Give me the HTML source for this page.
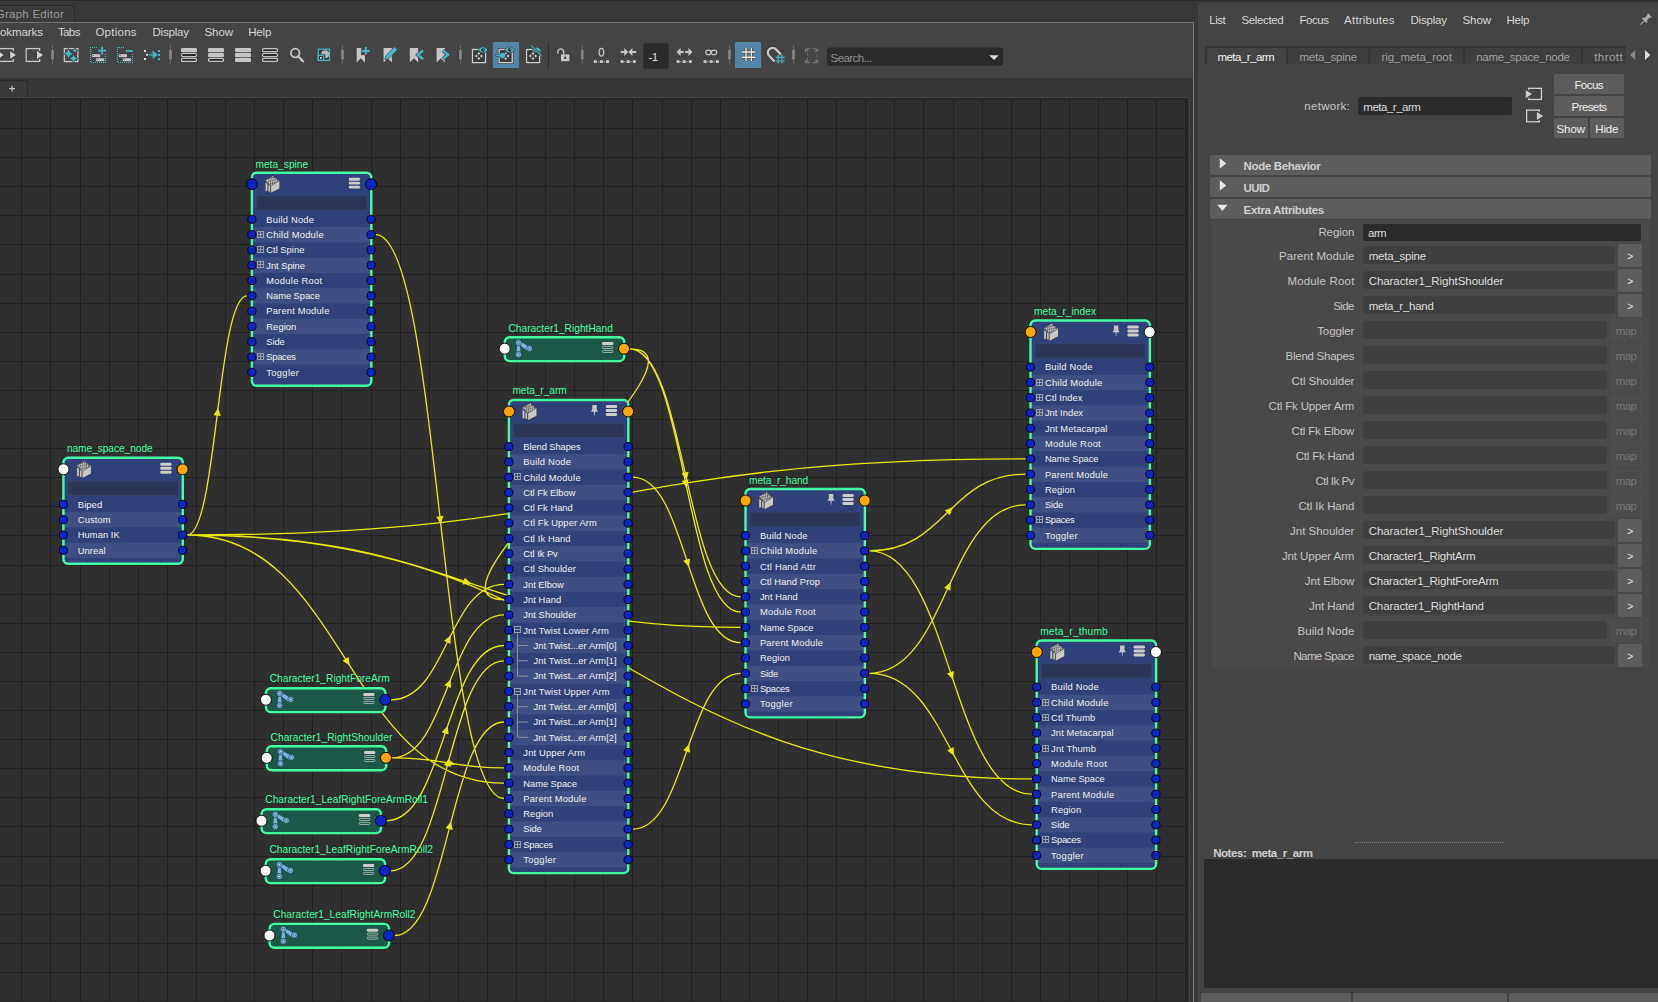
<!DOCTYPE html>
<html><head><meta charset="utf-8"><title>Node Editor</title>
<style>
html,body{margin:0;padding:0;}
body{width:1658px;height:1002px;overflow:hidden;background:#444444;position:relative;font-family:'Liberation Sans',sans-serif;}
.a{position:absolute;}
.t{position:absolute;white-space:pre;line-height:1.15;}
svg{overflow:hidden;}
</style></head><body>
<div class="a" style="left:0px;top:0px;width:1658px;height:3px;background:#383838;"></div>
<div class="a" style="left:0px;top:0px;width:1658px;height:1.4px;background:#2a2a2a;"></div>
<div class="a" style="left:0px;top:3px;width:1198px;height:20px;background:#383838;"></div>
<div class="a" style="left:-3px;top:4.8px;width:78px;height:18.2px;background:#3a3a3a;border:1px solid #2a2a2a;border-bottom:none;border-radius:3px 3px 0 0;box-sizing:border-box;"></div>
<div class="a" style="left:0px;top:22px;width:1194.3px;height:1.2px;background:#737373;"></div>
<div class="a" style="left:1193px;top:22px;width:1.4px;height:980px;background:#7a7a7a;"></div>
<div class="a" style="left:1194.4px;top:3px;width:3.6px;height:999px;background:#383838;"></div>
<div class="a" style="left:0px;top:78px;width:1193px;height:19.5px;background:#373737;"></div>
<div class="a" style="left:-3px;top:80.2px;width:31px;height:17.3px;background:#393939;border:1px solid #2b2b2b;border-bottom:none;border-radius:3px 3px 0 0;box-sizing:border-box;"></div>
<svg class="a" style="left:8px;top:84px" width="9" height="9"><path d="M1.2 4.6h5.8M4.1 1.7v5.8" stroke="#cfcfcf" stroke-width="1.15"/></svg>
<div class="a" style="left:1188px;top:78px;width:5px;height:924px;background:#373737;"></div>
<svg class="a" style="left:0;top:38px" width="1190" height="40" viewBox="0 38 1190 40"><rect x="-2" y="48.6" width="15.3" height="12.8" fill="none" stroke="#c6c6c6" stroke-width="1.3"/><rect x="9.8" y="51" width="5" height="8" fill="#444"/><path d="M10.2 51.2l5.8 3.8l-5.8 3.8z" fill="#cfcfcf"/><path d="M-1.4 51.2l5 3.8l-5 3.8z" fill="#cfcfcf"/><rect x="26.2" y="48.6" width="13.4" height="12.8" fill="none" stroke="#c6c6c6" stroke-width="1.3"/><rect x="36.6" y="51" width="4.4" height="8" fill="#444"/><path d="M37 51l6 4l-6 4z" fill="#cfcfcf"/><path d="M52.5 45V64.6" stroke="#727272" stroke-width="0.8"/><rect x="51.1" y="50" width="2.8" height="9.6" rx="0.8" fill="#858585"/><rect x="64.4" y="48.6" width="13.5" height="13" fill="none" stroke="#c6c6c6" stroke-width="1.3"/><path d="M68.4 49.5Q69.346 52.854 72.7 53.8Q69.346 54.745999999999995 68.4 58.099999999999994Q67.45400000000001 54.745999999999995 64.10000000000001 53.8Q67.45400000000001 52.854 68.4 49.5Z" fill="#45b9c9" stroke="#444" stroke-width="1.4" paint-order="stroke"/><path d="M73.6 55.0Q74.392 57.808 77.19999999999999 58.6Q74.392 59.392 73.6 62.2Q72.80799999999999 59.392 70.0 58.6Q72.80799999999999 57.808 73.6 55.0Z" fill="#45b9c9" stroke="#444" stroke-width="1.4" paint-order="stroke"/><path d="M74.8 48.199999999999996Q75.28399999999999 49.916 77.0 50.4Q75.28399999999999 50.884 74.8 52.6Q74.316 50.884 72.6 50.4Q74.316 49.916 74.8 48.199999999999996Z" fill="#45b9c9" stroke="#444" stroke-width="1.4" paint-order="stroke"/><rect x="90.5" y="47.5" width="15" height="15" fill="none" stroke="#45b9c9" stroke-width="1.2" stroke-dasharray="1 1" stroke-dashoffset="0.5"/><rect x="97.8" y="47" width="8.6" height="6.4" fill="#444"/><path d="M98.2 50.6h7.8M102.1 46.8v7.6" stroke="#45b9c9" stroke-width="1.7"/><rect x="92.0" y="54.2" width="8.2" height="2.9" fill="#c6c6c6"/><rect x="92.8" y="55.1" width="1" height="1" fill="#444"/><rect x="96.0" y="58.3" width="8.2" height="2.9" fill="#c6c6c6"/><rect x="96.8" y="59.2" width="1" height="1" fill="#444"/><rect x="117.5" y="47.5" width="15" height="15" fill="none" stroke="#45b9c9" stroke-width="1.2" stroke-dasharray="1 1" stroke-dashoffset="0.5"/><rect x="124.6" y="47" width="8.6" height="6.4" fill="#444"/><path d="M126.0 51h6.8" stroke="#45b9c9" stroke-width="1.7"/><rect x="118.8" y="54.2" width="8.2" height="2.9" fill="#c6c6c6"/><rect x="119.6" y="55.1" width="1" height="1" fill="#444"/><rect x="122.8" y="58.3" width="8.2" height="2.9" fill="#c6c6c6"/><rect x="123.6" y="59.2" width="1" height="1" fill="#444"/><rect x="143.8" y="49.8" width="2.4" height="2.4" fill="#eee" stroke="#2b2b2b" stroke-width="0.5"/><rect x="146" y="53.6" width="2.4" height="2.4" fill="#eee" stroke="#2b2b2b" stroke-width="0.5"/><rect x="143.8" y="57.8" width="2.4" height="2.4" fill="#eee" stroke="#2b2b2b" stroke-width="0.5"/><path d="M149 54.8h4.2v-3l3.6 3l-3.6 3v-3" fill="#45b9c9" stroke="#45b9c9" stroke-width="1.2"/><rect x="158" y="50" width="2" height="2" fill="#45b9c9"/><rect x="158" y="54" width="2" height="2" fill="#45b9c9"/><rect x="158" y="58.2" width="2" height="2" fill="#45b9c9"/><path d="M170.5 45V64.6" stroke="#727272" stroke-width="0.8"/><rect x="169.1" y="50" width="2.8" height="9.6" rx="0.8" fill="#858585"/><rect x="181" y="48.0" width="16" height="4.2" rx="1.2" fill="#c6c6c6"/><rect x="181.6" y="53.5" width="14.8" height="3.0" rx="1" fill="#2b2b2b" stroke="#c6c6c6" stroke-width="1.2"/><rect x="181.6" y="58.4" width="14.8" height="3.0" rx="1" fill="#2b2b2b" stroke="#c6c6c6" stroke-width="1.2"/><rect x="208" y="48.0" width="16" height="4.2" rx="1.2" fill="#c6c6c6"/><rect x="208" y="52.9" width="16" height="4.2" rx="1.2" fill="#c6c6c6"/><rect x="208.6" y="58.4" width="14.8" height="3.0" rx="1" fill="#2b2b2b" stroke="#c6c6c6" stroke-width="1.2"/><rect x="235" y="48.0" width="16" height="4.2" rx="1.2" fill="#c6c6c6"/><rect x="235" y="52.9" width="16" height="4.2" rx="1.2" fill="#c6c6c6"/><rect x="235" y="57.8" width="16" height="4.2" rx="1.2" fill="#c6c6c6"/><rect x="262.6" y="48.6" width="14.8" height="3.0" rx="1" fill="#2b2b2b" stroke="#c6c6c6" stroke-width="1.2"/><rect x="262.6" y="53.5" width="14.8" height="3.0" rx="1" fill="#2b2b2b" stroke="#c6c6c6" stroke-width="1.2"/><rect x="262.6" y="58.4" width="14.8" height="3.0" rx="1" fill="#2b2b2b" stroke="#c6c6c6" stroke-width="1.2"/><circle cx="295.2" cy="53" r="4.3" fill="none" stroke="#c6c6c6" stroke-width="1.8"/><path d="M298.4 56.4L303.2 61.4" stroke="#c6c6c6" stroke-width="2.2" stroke-linecap="round"/><rect x="318.3" y="49.2" width="11.2" height="11.2" fill="#3c3c3c" stroke="#45b9c9" stroke-width="1.2"/><circle cx="325.2" cy="54.2" r="3.9" fill="#b4b4b4"/><path d="M325.2 54.2L321 54.2A4.2 4.2 0 0 0 325.2 58.4Z" fill="#3c3c3c"/><rect x="318.3" y="55.4" width="5.2" height="5" fill="#333" stroke="#45b9c9" stroke-width="1.2"/><rect x="320" y="57" width="1.8" height="1.8" fill="#ddd"/><path d="M342.5 45V64.6" stroke="#727272" stroke-width="0.8"/><rect x="341.1" y="50" width="2.8" height="9.6" rx="0.8" fill="#858585"/><path d="M356.7 48h8.3v14.6l-4.15-4.4l-4.15 4.4z" fill="#c6c6c6"/><rect x="361.2" y="46.4" width="9" height="8.8" fill="#444"/><path d="M362 51h7.6M365.8 47v7.8" stroke="#45b9c9" stroke-width="2"/><path d="M383.6 48h8.3v14.6l-4.15-4.4l-4.15 4.4z" fill="#c6c6c6"/><path d="M384.8 59.6L385.8 55.8L394.4 46.8L397.6 49.8L388.8 58.6Z" fill="#45b9c9" stroke="#444" stroke-width="0.7"/><path d="M409.8 48h8.3v14.6l-4.15-4.4l-4.15 4.4z" fill="#c6c6c6"/><path d="M423 50.4L418 54.8L423 59.2" fill="none" stroke="#444" stroke-width="3.8"/><path d="M423 50.4L418 54.8L423 59.2" fill="none" stroke="#45b9c9" stroke-width="2.3"/><path d="M436.6 48h8.3v14.6l-4.15-4.4l-4.15 4.4z" fill="#c6c6c6"/><path d="M443 50.4L448 54.8L443 59.2" fill="none" stroke="#444" stroke-width="3.8"/><path d="M443 50.4L448 54.8L443 59.2" fill="none" stroke="#45b9c9" stroke-width="2.3"/><path d="M460.4 45V64.6" stroke="#727272" stroke-width="0.8"/><rect x="459.0" y="50" width="2.8" height="9.6" rx="0.8" fill="#858585"/><rect x="472.45" y="49.45" width="13.1" height="13.2" fill="none" stroke="#383434" stroke-width="2.5"/><rect x="472.45" y="49.45" width="13.1" height="13.2" fill="#3a3a3a" stroke="#cfcfcf" stroke-width="1.3"/><path d="M478.90000000000003 51.95L480.40000000000003 53.45L478.90000000000003 54.95L477.40000000000003 53.45Z" fill="#c6c6c6"/><path d="M476.35 54.5L477.85 56.0L476.35 57.5L474.85 56.0Z" fill="#c6c6c6"/><path d="M481.45000000000005 54.5L482.95000000000005 56.0L481.45000000000005 57.5L479.95000000000005 56.0Z" fill="#c6c6c6"/><path d="M478.90000000000003 57.05L480.40000000000003 58.55L478.90000000000003 60.05L477.40000000000003 58.55Z" fill="#c6c6c6"/><path d="M477.8 50.0Q482.90000000000003 43.6 488.00000000000006 50.0Q482.90000000000003 56.2 477.8 50.0Z" fill="#45b9c9" stroke="#3d3a3a" stroke-width="0.7"/><circle cx="483.00000000000006" cy="49.8" r="1.85" fill="#3a2f2f"/><circle cx="483.6" cy="49.3" r="0.6" fill="#45b9c9"/><rect x="492.9" y="41.9" width="26.2" height="26.1" rx="1.2" fill="#5285a6"/><rect x="499.15" y="49.45" width="13.1" height="13.2" fill="none" stroke="#383434" stroke-width="2.5"/><rect x="499.15" y="49.45" width="13.1" height="13.2" fill="#3a3a3a" stroke="#cfcfcf" stroke-width="1.3"/><path d="M505.6 51.95L507.1 53.45L505.6 54.95L504.1 53.45Z" fill="#c6c6c6"/><path d="M503.05 54.5L504.55 56.0L503.05 57.5L501.55 56.0Z" fill="#c6c6c6"/><path d="M508.15000000000003 54.5L509.65000000000003 56.0L508.15000000000003 57.5L506.65000000000003 56.0Z" fill="#c6c6c6"/><path d="M505.6 57.05L507.1 58.55L505.6 60.05L504.1 58.55Z" fill="#c6c6c6"/><path d="M504.5 50.0Q509.6 43.6 514.7 50.0Q509.6 56.2 504.5 50.0Z" fill="#45b9c9" stroke="#3d3a3a" stroke-width="0.7"/><circle cx="509.70000000000005" cy="49.8" r="1.85" fill="#3a2f2f"/><circle cx="510.3" cy="49.3" r="0.6" fill="#45b9c9"/><path d="M496.4 55.5h5" stroke="#3d3a3a" stroke-width="2.6" stroke-linecap="round"/><circle cx="502.5" cy="55.5" r="3.3" fill="#3d3a3a"/><path d="M496.4 55.5h5" stroke="#45b9c9" stroke-width="1.3" stroke-linecap="round"/><circle cx="502.5" cy="55.5" r="2.7" fill="#45b9c9"/><rect x="526.55" y="49.45" width="13.1" height="13.2" fill="none" stroke="#383434" stroke-width="2.5"/><rect x="526.55" y="49.45" width="13.1" height="13.2" fill="#3a3a3a" stroke="#cfcfcf" stroke-width="1.3"/><path d="M533.0 51.95L534.5 53.45L533.0 54.95L531.5 53.45Z" fill="#c6c6c6"/><path d="M530.45 54.5L531.95 56.0L530.45 57.5L528.95 56.0Z" fill="#c6c6c6"/><path d="M535.55 54.5L537.05 56.0L535.55 57.5L534.05 56.0Z" fill="#c6c6c6"/><path d="M533.0 57.05L534.5 58.55L533.0 60.05L531.5 58.55Z" fill="#c6c6c6"/><path d="M531.8 50.4Q536.4 44.0 541.4 50.2Q538.4 52.6 535.8 53.0Z" fill="#45b9c9" stroke="#3d3a3a" stroke-width="0.6"/><path d="M531.0 45.4L541.4 55.6" stroke="#3d3a3a" stroke-width="2.6"/><path d="M531.0 45.4L541.4 55.6" stroke="#45b9c9" stroke-width="1.2"/><path d="M548.4 43V67.6" stroke="#2b2b2b" stroke-width="1.1"/><rect x="561" y="54.4" width="8.4" height="6.8" fill="#c6c6c6"/><rect x="564.2" y="56.6" width="2" height="2.4" fill="#333"/><path d="M557.8 53.4v-1.6a2.9 2.9 0 0 1 5.8 0v2.6" fill="none" stroke="#c6c6c6" stroke-width="1.4"/><path d="M582.3 45V64.6" stroke="#727272" stroke-width="0.8"/><rect x="580.9" y="50" width="2.8" height="9.6" rx="0.8" fill="#858585"/><ellipse cx="601.4" cy="52.2" rx="2.3" ry="3.8" fill="none" stroke="#c6c6c6" stroke-width="1.3"/><rect x="593.8" y="60.2" width="3" height="2.8" fill="#c6c6c6"/><rect x="599.9" y="60.2" width="3" height="2.8" fill="#c6c6c6"/><rect x="606.0" y="60.2" width="3" height="2.8" fill="#c6c6c6"/><rect x="597.6999999999999" y="61.2" width="1.1" height="1.1" fill="#c6c6c6"/><rect x="603.8" y="61.2" width="1.1" height="1.1" fill="#c6c6c6"/><path d="M620.6 52h4.4M631 52h5.2" stroke="#c6c6c6" stroke-width="1.9"/><path d="M624.2 48l4 4l-4 4zM632.4 48l-4 4l4 4z" fill="#c6c6c6"/><rect x="620.6" y="60.2" width="3" height="2.8" fill="#c6c6c6"/><rect x="626.7" y="60.2" width="3" height="2.8" fill="#c6c6c6"/><rect x="632.8000000000001" y="60.2" width="3" height="2.8" fill="#c6c6c6"/><rect x="624.5" y="61.2" width="1.1" height="1.1" fill="#c6c6c6"/><rect x="630.6" y="61.2" width="1.1" height="1.1" fill="#c6c6c6"/><rect x="643" y="43.2" width="25.9" height="25.6" rx="2.5" fill="#2b2b2b"/><path d="M679.5 52h4.2M685.2 52h4.2" stroke="#c6c6c6" stroke-width="1.9"/><path d="M680.6 48l-4.2 4l4.2 4zM688.4 48l4.2 4l-4.2 4z" fill="#c6c6c6"/><rect x="676.6" y="60.2" width="3" height="2.8" fill="#c6c6c6"/><rect x="682.7" y="60.2" width="3" height="2.8" fill="#c6c6c6"/><rect x="688.8000000000001" y="60.2" width="3" height="2.8" fill="#c6c6c6"/><rect x="680.5" y="61.2" width="1.1" height="1.1" fill="#c6c6c6"/><rect x="686.6" y="61.2" width="1.1" height="1.1" fill="#c6c6c6"/><ellipse cx="708.4" cy="52.4" rx="2.7" ry="2.2" fill="none" stroke="#c6c6c6" stroke-width="1.2"/><ellipse cx="714" cy="52.4" rx="2.7" ry="2.2" fill="none" stroke="#c6c6c6" stroke-width="1.2"/><rect x="703.6" y="60.2" width="3" height="2.8" fill="#c6c6c6"/><rect x="709.7" y="60.2" width="3" height="2.8" fill="#c6c6c6"/><rect x="715.8000000000001" y="60.2" width="3" height="2.8" fill="#c6c6c6"/><rect x="707.5" y="61.2" width="1.1" height="1.1" fill="#c6c6c6"/><rect x="713.6" y="61.2" width="1.1" height="1.1" fill="#c6c6c6"/><path d="M729.5 45V64.6" stroke="#727272" stroke-width="0.8"/><rect x="728.1" y="50" width="2.8" height="9.6" rx="0.8" fill="#858585"/><rect x="735" y="41.9" width="26.1" height="26.1" rx="1.2" fill="#5285a6"/><path d="M746 48v13M751.4 48v13M742 52h13.4M742 57.2h13.4" stroke="#333" stroke-width="2.6"/><path d="M746 48v13M751.4 48v13M742 52h13.4M742 57.2h13.4" stroke="#ececec" stroke-width="1.4"/><path d="M774.5 61.5L769.2 55.8a4.6 4.6 0 0 1 6.8 -6.4L781 54.6" fill="none" stroke="#333" stroke-width="3.6"/><path d="M774.5 61.5L769.2 55.8a4.6 4.6 0 0 1 6.8 -6.4L781 54.6" fill="none" stroke="#c6c6c6" stroke-width="2.4"/><path d="M778.2 55v8.6M782 55v8.6M775.6 57.4h9M775.6 61h9" stroke="#45b9c9" stroke-width="1.2"/><path d="M793.5 45V64.6" stroke="#727272" stroke-width="0.8"/><rect x="792.1" y="50" width="2.8" height="9.6" rx="0.8" fill="#858585"/><rect x="807.5" y="48.6" width="9.4" height="14" fill="none" stroke="#6e6e6e" stroke-width="1.1" stroke-dasharray="3 2"/><path d="M805 48l4 2.2l-4 2.2z" fill="#747474"/><path d="M815.3 48l4 2.2l-4 2.2z" fill="#747474"/><path d="M805 59.4l4 2.2l-4 2.2z" fill="#747474"/><path d="M815.3 59.4l4 2.2l-4 2.2z" fill="#747474"/><rect x="827" y="47.5" width="176" height="18.2" rx="2.5" fill="#2b2b2b"/><path d="M989.2 55.2h9.6l-4.8 4.8z" fill="#dcdcdc"/></svg>
<svg class="a" style="left:1637px;top:12px" width="16" height="16"><g transform="rotate(45 8 8)"><path d="M5.4 1h5.2v1.4h-0.9v4l1.6 1.8v1H8.6v4.6L8 15l-0.6-1.2V9.2H4.7v-1l1.6-1.8v-4H5.4z" fill="#a8a8a8"/></g></svg>
<div class="a" style="left:1205px;top:45.7px;width:421px;height:18.6px;background:#363636;"></div>
<div class="a" style="left:1207px;top:47.8px;width:79px;height:16.6px;background:#444444;border-radius:3px 3px 0 0;"></div>
<div class="a" style="left:1288.4px;top:47.9px;width:79.59999999999991px;height:15.8px;background:#3e3e3e;border-radius:3px 3px 0 0;"></div>
<div class="a" style="left:1370.4px;top:47.9px;width:92.59999999999991px;height:15.8px;background:#3e3e3e;border-radius:3px 3px 0 0;"></div>
<div class="a" style="left:1465px;top:47.9px;width:116px;height:15.8px;background:#3e3e3e;border-radius:3px 3px 0 0;"></div>
<div class="a" style="left:1583.4px;top:47.9px;width:42.59999999999991px;height:15.8px;background:#3e3e3e;border-radius:3px 0 0 0;"></div>
<svg class="a" style="left:1628px;top:48px" width="28" height="14"><path d="M7.2 2.1v10L2 7.1z" fill="#8a8a8a"/><path d="M17 2.1v10l5.2-5z" fill="#dcdcdc"/></svg>
<div class="a" style="left:1358px;top:96.8px;width:154px;height:18px;background:#2b2b2b;border-radius:2.5px;"></div>
<svg class="a" style="left:1524px;top:86px" width="24" height="40"><rect x="4.55" y="2.35" width="12.9" height="11.1" fill="none" stroke="#cdcdcd" stroke-width="1.3"/><rect x="1.4" y="3.9" width="4.2" height="8.3" fill="#444"/><path d="M1.8 4.2v7.7l6.2-3.85z" fill="#cdcdcd"/><rect x="2.65" y="24.15" width="12.7" height="11.6" fill="none" stroke="#cdcdcd" stroke-width="1.3"/><rect x="12.5" y="25.6" width="4.4" height="8.7" fill="#444"/><path d="M12.9 25.9v8.1l6.3-4.05z" fill="#cdcdcd"/></svg>
<div class="a" style="left:1554px;top:74px;width:70px;height:19.8px;background:#5d5d5d;border-radius:1.5px;"></div>
<div class="a" style="left:1554px;top:96px;width:70px;height:19.8px;background:#5d5d5d;border-radius:1.5px;"></div>
<div class="a" style="left:1554px;top:118px;width:34px;height:19.8px;background:#5d5d5d;border-radius:1.5px;"></div>
<div class="a" style="left:1590px;top:118px;width:34px;height:19.8px;background:#5d5d5d;border-radius:1.5px;"></div>
<div class="a" style="left:1209.8px;top:154.7px;width:441.7px;height:20px;background:#5d5d5d;border-radius:2px;"></div>
<svg class="a" style="left:1217px;top:156.89999999999998px" width="12" height="14"><path d="M2.8 1.2v10.4L9.2 6.4z" fill="#e6e6e6"/></svg>
<div class="a" style="left:1209.8px;top:177px;width:441.7px;height:20px;background:#5d5d5d;border-radius:2px;"></div>
<svg class="a" style="left:1217px;top:179.2px" width="12" height="14"><path d="M2.8 1.2v10.4L9.2 6.4z" fill="#e6e6e6"/></svg>
<div class="a" style="left:1209.8px;top:199px;width:441.7px;height:20px;background:#5d5d5d;border-radius:2px;"></div>
<svg class="a" style="left:1216px;top:202.2px" width="14" height="12"><path d="M1.2 2.8h10.4L6.4 9z" fill="#e6e6e6"/></svg>
<div class="a" style="left:1212px;top:220px;width:437px;height:446.6px;background:#494949;"></div>
<div class="a" style="left:1363.2px;top:223.7px;width:277.8px;height:17px;background:#2b2b2b;border-radius:2px;"></div>
<div class="a" style="left:1363.2px;top:246.3px;width:251.8px;height:17.4px;background:#3f3f3f;border-radius:2.5px;"></div>
<div class="a" style="left:1618px;top:244.3px;width:24px;height:22.4px;background:#5d5d5d;border-radius:1.5px;"></div>
<div class="a" style="left:1363.2px;top:271.3px;width:251.8px;height:17.4px;background:#3f3f3f;border-radius:2.5px;"></div>
<div class="a" style="left:1618px;top:269.3px;width:24px;height:22.4px;background:#5d5d5d;border-radius:1.5px;"></div>
<div class="a" style="left:1363.2px;top:296.3px;width:251.8px;height:17.4px;background:#3f3f3f;border-radius:2.5px;"></div>
<div class="a" style="left:1618px;top:294.3px;width:24px;height:22.4px;background:#5d5d5d;border-radius:1.5px;"></div>
<div class="a" style="left:1363.2px;top:321.3px;width:243.4px;height:17.4px;background:#3f3f3f;border-radius:2.5px;"></div>
<div class="a" style="left:1610.3px;top:319.3px;width:31.7px;height:22.4px;background:#4c4c4c;border-radius:1.5px;"></div>
<div class="a" style="left:1363.2px;top:346.3px;width:243.4px;height:17.4px;background:#3f3f3f;border-radius:2.5px;"></div>
<div class="a" style="left:1610.3px;top:344.3px;width:31.7px;height:22.4px;background:#4c4c4c;border-radius:1.5px;"></div>
<div class="a" style="left:1363.2px;top:371.3px;width:243.4px;height:17.4px;background:#3f3f3f;border-radius:2.5px;"></div>
<div class="a" style="left:1610.3px;top:369.3px;width:31.7px;height:22.4px;background:#4c4c4c;border-radius:1.5px;"></div>
<div class="a" style="left:1363.2px;top:396.3px;width:243.4px;height:17.4px;background:#3f3f3f;border-radius:2.5px;"></div>
<div class="a" style="left:1610.3px;top:394.3px;width:31.7px;height:22.4px;background:#4c4c4c;border-radius:1.5px;"></div>
<div class="a" style="left:1363.2px;top:421.3px;width:243.4px;height:17.4px;background:#3f3f3f;border-radius:2.5px;"></div>
<div class="a" style="left:1610.3px;top:419.3px;width:31.7px;height:22.4px;background:#4c4c4c;border-radius:1.5px;"></div>
<div class="a" style="left:1363.2px;top:446.3px;width:243.4px;height:17.4px;background:#3f3f3f;border-radius:2.5px;"></div>
<div class="a" style="left:1610.3px;top:444.3px;width:31.7px;height:22.4px;background:#4c4c4c;border-radius:1.5px;"></div>
<div class="a" style="left:1363.2px;top:471.3px;width:243.4px;height:17.4px;background:#3f3f3f;border-radius:2.5px;"></div>
<div class="a" style="left:1610.3px;top:469.3px;width:31.7px;height:22.4px;background:#4c4c4c;border-radius:1.5px;"></div>
<div class="a" style="left:1363.2px;top:496.3px;width:243.4px;height:17.4px;background:#3f3f3f;border-radius:2.5px;"></div>
<div class="a" style="left:1610.3px;top:494.3px;width:31.7px;height:22.4px;background:#4c4c4c;border-radius:1.5px;"></div>
<div class="a" style="left:1363.2px;top:521.3px;width:251.8px;height:17.4px;background:#3f3f3f;border-radius:2.5px;"></div>
<div class="a" style="left:1618px;top:519.3px;width:24px;height:22.4px;background:#5d5d5d;border-radius:1.5px;"></div>
<div class="a" style="left:1363.2px;top:546.3px;width:251.8px;height:17.4px;background:#3f3f3f;border-radius:2.5px;"></div>
<div class="a" style="left:1618px;top:544.3px;width:24px;height:22.4px;background:#5d5d5d;border-radius:1.5px;"></div>
<div class="a" style="left:1363.2px;top:571.3px;width:251.8px;height:17.4px;background:#3f3f3f;border-radius:2.5px;"></div>
<div class="a" style="left:1618px;top:569.3px;width:24px;height:22.4px;background:#5d5d5d;border-radius:1.5px;"></div>
<div class="a" style="left:1363.2px;top:596.3px;width:251.8px;height:17.4px;background:#3f3f3f;border-radius:2.5px;"></div>
<div class="a" style="left:1618px;top:594.3px;width:24px;height:22.4px;background:#5d5d5d;border-radius:1.5px;"></div>
<div class="a" style="left:1363.2px;top:621.3px;width:243.4px;height:17.4px;background:#3f3f3f;border-radius:2.5px;"></div>
<div class="a" style="left:1610.3px;top:619.3px;width:31.7px;height:22.4px;background:#4c4c4c;border-radius:1.5px;"></div>
<div class="a" style="left:1363.2px;top:646.3px;width:251.8px;height:17.4px;background:#3f3f3f;border-radius:2.5px;"></div>
<div class="a" style="left:1618px;top:644.3px;width:24px;height:22.4px;background:#5d5d5d;border-radius:1.5px;"></div>
<div class="a" style="left:1354.8px;top:841.9px;width:148.4px;height:0;border-top:1px dotted #808080"></div>
<div class="a" style="left:1203.7px;top:859px;width:454.3px;height:128.6px;background:#2b2b2b;"></div>
<div class="a" style="left:1201.3px;top:993.4px;width:149.70000000000005px;height:10px;background:#5d5d5d;border-radius:2px 2px 0 0;"></div>
<div class="a" style="left:1353px;top:993.4px;width:153.70000000000005px;height:10px;background:#5d5d5d;border-radius:2px 2px 0 0;"></div>
<div class="a" style="left:1509px;top:993.4px;width:151px;height:10px;background:#5d5d5d;border-radius:2px 2px 0 0;"></div>
<svg id="g" width="1190" height="905" viewBox="0 97.0 1190 905" style="position:absolute;left:0;top:97.0px" font-family="'Liberation Sans',sans-serif">
<defs><pattern id="ck" width="2" height="2" patternUnits="userSpaceOnUse" patternTransform="matrix(1.14 -0.63 0.93 0.91 0.3 0.2)"><rect width="2" height="2" fill="#505050"/><rect width="1" height="1" fill="#dcdcdc"/><rect x="1" y="1" width="1" height="1" fill="#dcdcdc"/></pattern></defs>
<rect x="0" y="97.0" width="1187" height="905" fill="#2f2f2f"/>
<path d="M21.5 97.0V1002.0M50.5 97.0V1002.0M80.5 97.0V1002.0M109.5 97.0V1002.0M138.5 97.0V1002.0M167.5 97.0V1002.0M196.5 97.0V1002.0M225.5 97.0V1002.0M254.5 97.0V1002.0M283.5 97.0V1002.0M312.5 97.0V1002.0M341.5 97.0V1002.0M371.5 97.0V1002.0M400.5 97.0V1002.0M429.5 97.0V1002.0M458.5 97.0V1002.0M487.5 97.0V1002.0M516.5 97.0V1002.0M545.5 97.0V1002.0M574.5 97.0V1002.0M603.5 97.0V1002.0M632.5 97.0V1002.0M662.5 97.0V1002.0M691.5 97.0V1002.0M720.5 97.0V1002.0M749.5 97.0V1002.0M778.5 97.0V1002.0M807.5 97.0V1002.0M836.5 97.0V1002.0M865.5 97.0V1002.0M894.5 97.0V1002.0M923.5 97.0V1002.0M953.5 97.0V1002.0M982.5 97.0V1002.0M1011.5 97.0V1002.0M1040.5 97.0V1002.0M1069.5 97.0V1002.0M1098.5 97.0V1002.0M1127.5 97.0V1002.0M1156.5 97.0V1002.0M1185.5 97.0V1002.0M0 128.5H1187M0 157.5H1187M0 186.5H1187M0 215.5H1187M0 244.5H1187M0 274.5H1187M0 303.5H1187M0 332.5H1187M0 361.5H1187M0 390.5H1187M0 419.5H1187M0 448.5H1187M0 477.5H1187M0 506.5H1187M0 535.5H1187M0 565.5H1187M0 594.5H1187M0 623.5H1187M0 652.5H1187M0 681.5H1187M0 710.5H1187M0 739.5H1187M0 768.5H1187M0 797.5H1187M0 826.5H1187M0 856.5H1187M0 885.5H1187M0 914.5H1187M0 943.5H1187M0 972.5H1187M0 1001.5H1187" stroke="#212121" stroke-width="1" fill="none" shape-rendering="crispEdges"/>
<path d="M187.2 535.0C217.1 535.0 217.1 295.8 247.1 295.8M187.2 535.0C345.6 535.0 345.6 783.2 504.1 783.2M187.2 535.0C463.9 535.0 463.9 627.4 740.7 627.4M187.2 535.0C606.5 535.0 606.5 458.9 1025.7 458.9M187.2 535.0C609.5 535.0 609.6 778.9 1031.9 778.9M375.7 234.6C439.9 234.6 439.9 798.5 504.1 798.5M629.6 348.8C727.6 348.8 406.1 599.6 504.1 599.6M629.6 348.8C685.1 348.8 685.1 596.8 740.7 596.8M629.6 348.8C685.1 348.8 685.1 612.1 740.7 612.1M390.8 699.8C447.5 699.8 447.5 584.3 504.1 584.3M391.6 757.9C447.9 757.9 447.9 614.9 504.1 614.9M391.6 757.9C447.9 757.9 447.9 767.9 504.1 767.9M386.4 820.8C445.2 820.8 445.2 645.5 504.1 645.5M390.5 870.8C447.3 870.8 447.3 660.8 504.1 660.8M394.4 935.5C449.2 935.5 449.2 722.0 504.1 722.0M632.7 477.2C686.7 477.2 686.7 642.7 740.7 642.7M632.7 829.1C686.7 829.1 686.7 673.3 740.7 673.3M869.3 550.9C947.5 550.9 947.5 474.2 1025.7 474.2M869.3 550.9C950.6 550.9 950.6 794.2 1031.9 794.2M869.3 673.3C947.5 673.3 947.5 504.8 1025.7 504.8M869.3 673.3C950.6 673.3 950.6 824.8 1031.9 824.8" stroke="#eaea08" stroke-width="1.3" fill="none"/>
<path d="M218.1 408.0L220.7 416.1L213.5 415.3ZM349.7 665.4L342.5 660.8L348.5 656.9ZM471.1 583.6L462.5 584.5L464.8 577.7ZM613.8 495.6L606.8 500.5L605.5 493.5ZM616.0 660.7L607.5 659.9L611.1 653.7ZM440.7 524.0L436.3 516.7L443.4 515.8ZM561.9 479.8L564.4 471.6L569.7 476.3ZM686.8 480.1L681.6 473.3L688.6 471.7ZM686.7 487.8L681.6 480.9L688.6 479.4ZM450.8 635.3L450.5 643.9L444.1 640.7ZM450.6 679.4L451.1 688.0L444.4 685.3ZM455.2 764.2L446.9 766.4L448.2 759.3ZM447.6 726.0L448.6 734.6L441.7 732.3ZM449.3 758.5L450.7 767.0L443.7 765.1ZM451.1 821.5L452.7 829.9L445.7 828.1ZM689.0 567.1L683.2 560.8L690.0 558.5ZM689.2 744.1L690.0 752.7L683.2 750.3ZM952.9 507.3L949.8 515.3L944.8 510.2ZM953.0 679.7L947.1 673.4L953.9 671.1ZM950.7 582.2L950.6 590.8L944.1 587.8ZM954.1 755.7L947.3 750.5L953.6 747.1Z" fill="#eaea08"/>
<clipPath id="cmeta_spine"><rect x="251.90" y="172.70" width="119.40" height="213.05" rx="4.8"/></clipPath><rect x="251.90" y="172.70" width="119.40" height="213.05" rx="4.8" fill="#30417a"/><g clip-path="url(#cmeta_spine)"><rect x="250.70" y="226.95" width="121.80" height="15.30" fill="#404f83"/><rect x="250.70" y="257.55" width="121.80" height="15.30" fill="#404f83"/><rect x="250.70" y="288.15" width="121.80" height="15.30" fill="#404f83"/><rect x="250.70" y="318.75" width="121.80" height="15.30" fill="#404f83"/><rect x="250.70" y="349.35" width="121.80" height="15.30" fill="#404f83"/></g><rect x="251.90" y="172.70" width="119.40" height="213.05" rx="4.8" fill="none" stroke="#43ffa3" stroke-width="2.4"/><rect x="256.30" y="195.80" width="110.80" height="14.6" fill="#2d3659" stroke="#3a4570" stroke-width="0.8"/><polygon points="264.90,180.20 273.80,175.20 274.60,178.00 276.70,178.00 277.30,180.10 279.90,180.20 279.90,188.80 270.70,193.40 270.50,191.90 268.30,192.70 268.00,191.10 265.10,192.10" fill="#4c4c4c"/><polygon points="265.40,180.50 273.60,175.80 274.30,178.30 276.50,178.30 277.00,180.40 279.30,180.60 270.90,185.80" fill="url(#ck)"/><polygon points="271.10,186.30 279.40,181.10 279.40,188.40 271.10,192.60" fill="#c8c8c8"/><polygon points="268.50,184.80 270.10,185.80 270.10,191.30 268.50,192.00" fill="#c2c2c2"/><polygon points="265.60,182.60 267.40,183.70 267.40,190.60 265.60,191.40" fill="#c2c2c2"/><rect x="348.75" y="177.70" width="11.4" height="2.95" rx="1.3" fill="#cdccc6"/><rect x="348.75" y="181.67" width="11.4" height="2.95" rx="1.3" fill="#cdccc6"/><rect x="348.75" y="185.64" width="11.4" height="2.95" rx="1.3" fill="#cdccc6"/><circle cx="252.00" cy="184.20" r="5.5" fill="#0a26c6" stroke="#000" stroke-width="0.9"/><circle cx="371.10" cy="184.20" r="5.5" fill="#0a26c6" stroke="#000" stroke-width="0.9"/><circle cx="251.90" cy="219.30" r="4.1" fill="#0a26c6" stroke="#000" stroke-width="0.9"/><circle cx="371.10" cy="219.30" r="4.1" fill="#0a26c6" stroke="#000" stroke-width="0.9"/><circle cx="251.90" cy="234.60" r="4.1" fill="#0a26c6" stroke="#000" stroke-width="0.9"/><circle cx="371.10" cy="234.60" r="4.1" fill="#0a26c6" stroke="#000" stroke-width="0.9"/><g shape-rendering="crispEdges" stroke="#9e9e9e" stroke-width="1" fill="none"><rect x="257.5" y="231.5" width="6" height="6"/><path d="M257.5 234.5h6"/><path d="M260.5 231.5v6"/></g><circle cx="251.90" cy="249.90" r="4.1" fill="#0a26c6" stroke="#000" stroke-width="0.9"/><circle cx="371.10" cy="249.90" r="4.1" fill="#0a26c6" stroke="#000" stroke-width="0.9"/><g shape-rendering="crispEdges" stroke="#9e9e9e" stroke-width="1" fill="none"><rect x="257.5" y="246.5" width="6" height="6"/><path d="M257.5 249.5h6"/><path d="M260.5 246.5v6"/></g><circle cx="251.90" cy="265.20" r="4.1" fill="#0a26c6" stroke="#000" stroke-width="0.9"/><circle cx="371.10" cy="265.20" r="4.1" fill="#0a26c6" stroke="#000" stroke-width="0.9"/><g shape-rendering="crispEdges" stroke="#9e9e9e" stroke-width="1" fill="none"><rect x="257.5" y="261.5" width="6" height="6"/><path d="M257.5 264.5h6"/><path d="M260.5 261.5v6"/></g><circle cx="251.90" cy="280.50" r="4.1" fill="#0a26c6" stroke="#000" stroke-width="0.9"/><circle cx="371.10" cy="280.50" r="4.1" fill="#0a26c6" stroke="#000" stroke-width="0.9"/><circle cx="251.90" cy="295.80" r="4.1" fill="#0a26c6" stroke="#000" stroke-width="0.9"/><circle cx="371.10" cy="295.80" r="4.1" fill="#0a26c6" stroke="#000" stroke-width="0.9"/><circle cx="251.90" cy="311.10" r="4.1" fill="#0a26c6" stroke="#000" stroke-width="0.9"/><circle cx="371.10" cy="311.10" r="4.1" fill="#0a26c6" stroke="#000" stroke-width="0.9"/><circle cx="251.90" cy="326.40" r="4.1" fill="#0a26c6" stroke="#000" stroke-width="0.9"/><circle cx="371.10" cy="326.40" r="4.1" fill="#0a26c6" stroke="#000" stroke-width="0.9"/><circle cx="251.90" cy="341.70" r="4.1" fill="#0a26c6" stroke="#000" stroke-width="0.9"/><circle cx="371.10" cy="341.70" r="4.1" fill="#0a26c6" stroke="#000" stroke-width="0.9"/><circle cx="251.90" cy="357.00" r="4.1" fill="#0a26c6" stroke="#000" stroke-width="0.9"/><circle cx="371.10" cy="357.00" r="4.1" fill="#0a26c6" stroke="#000" stroke-width="0.9"/><g shape-rendering="crispEdges" stroke="#9e9e9e" stroke-width="1" fill="none"><rect x="257.5" y="353.5" width="6" height="6"/><path d="M257.5 356.5h6"/><path d="M260.5 353.5v6"/></g><circle cx="251.90" cy="372.30" r="4.1" fill="#0a26c6" stroke="#000" stroke-width="0.9"/><circle cx="371.10" cy="372.30" r="4.1" fill="#0a26c6" stroke="#000" stroke-width="0.9"/>
<clipPath id="cname_space_node"><rect x="63.40" y="457.80" width="119.40" height="105.95" rx="4.8"/></clipPath><rect x="63.40" y="457.80" width="119.40" height="105.95" rx="4.8" fill="#30417a"/><g clip-path="url(#cname_space_node)"><rect x="62.20" y="512.05" width="121.80" height="15.30" fill="#404f83"/><rect x="62.20" y="542.65" width="121.80" height="15.30" fill="#404f83"/></g><rect x="63.40" y="457.80" width="119.40" height="105.95" rx="4.8" fill="none" stroke="#43ffa3" stroke-width="2.4"/><rect x="67.80" y="480.90" width="110.80" height="14.6" fill="#2d3659" stroke="#3a4570" stroke-width="0.8"/><polygon points="76.40,465.30 85.30,460.30 86.10,463.10 88.20,463.10 88.80,465.20 91.40,465.30 91.40,473.90 82.20,478.50 82.00,477.00 79.80,477.80 79.50,476.20 76.60,477.20" fill="#4c4c4c"/><polygon points="76.90,465.60 85.10,460.90 85.80,463.40 88.00,463.40 88.50,465.50 90.80,465.70 82.40,470.90" fill="url(#ck)"/><polygon points="82.60,471.40 90.90,466.20 90.90,473.50 82.60,477.70" fill="#c8c8c8"/><polygon points="80.00,469.90 81.60,470.90 81.60,476.40 80.00,477.10" fill="#c2c2c2"/><polygon points="77.10,467.70 78.90,468.80 78.90,475.70 77.10,476.50" fill="#c2c2c2"/><rect x="160.25" y="462.80" width="11.4" height="2.95" rx="1.3" fill="#cdccc6"/><rect x="160.25" y="466.77" width="11.4" height="2.95" rx="1.3" fill="#cdccc6"/><rect x="160.25" y="470.74" width="11.4" height="2.95" rx="1.3" fill="#cdccc6"/><circle cx="63.50" cy="469.30" r="5.5" fill="#ffffff" stroke="#000" stroke-width="0.9"/><circle cx="182.60" cy="469.30" r="5.5" fill="#ffa500" stroke="#000" stroke-width="0.9"/><circle cx="63.40" cy="504.40" r="4.1" fill="#0a26c6" stroke="#000" stroke-width="0.9"/><circle cx="182.60" cy="504.40" r="4.1" fill="#0a26c6" stroke="#000" stroke-width="0.9"/><circle cx="63.40" cy="519.70" r="4.1" fill="#0a26c6" stroke="#000" stroke-width="0.9"/><circle cx="182.60" cy="519.70" r="4.1" fill="#0a26c6" stroke="#000" stroke-width="0.9"/><circle cx="63.40" cy="535.00" r="4.1" fill="#0a26c6" stroke="#000" stroke-width="0.9"/><circle cx="182.60" cy="535.00" r="4.1" fill="#0a26c6" stroke="#000" stroke-width="0.9"/><circle cx="63.40" cy="550.30" r="4.1" fill="#0a26c6" stroke="#000" stroke-width="0.9"/><circle cx="182.60" cy="550.30" r="4.1" fill="#0a26c6" stroke="#000" stroke-width="0.9"/>
<clipPath id="cmeta_r_arm"><rect x="508.90" y="400.00" width="119.40" height="473.15" rx="4.8"/></clipPath><rect x="508.90" y="400.00" width="119.40" height="473.15" rx="4.8" fill="#30417a"/><g clip-path="url(#cmeta_r_arm)"><rect x="507.70" y="454.25" width="121.80" height="15.30" fill="#404f83"/><rect x="507.70" y="484.85" width="121.80" height="15.30" fill="#404f83"/><rect x="507.70" y="515.45" width="121.80" height="15.30" fill="#404f83"/><rect x="507.70" y="546.05" width="121.80" height="15.30" fill="#404f83"/><rect x="507.70" y="576.65" width="121.80" height="15.30" fill="#404f83"/><rect x="507.70" y="607.25" width="121.80" height="15.30" fill="#404f83"/><rect x="507.70" y="637.85" width="121.80" height="15.30" fill="#404f83"/><rect x="507.70" y="668.45" width="121.80" height="15.30" fill="#404f83"/><rect x="507.70" y="699.05" width="121.80" height="15.30" fill="#404f83"/><rect x="507.70" y="729.65" width="121.80" height="15.30" fill="#404f83"/><rect x="507.70" y="760.25" width="121.80" height="15.30" fill="#404f83"/><rect x="507.70" y="790.85" width="121.80" height="15.30" fill="#404f83"/><rect x="507.70" y="821.45" width="121.80" height="15.30" fill="#404f83"/><rect x="507.70" y="852.05" width="121.80" height="15.30" fill="#404f83"/></g><rect x="508.90" y="400.00" width="119.40" height="473.15" rx="4.8" fill="none" stroke="#43ffa3" stroke-width="2.4"/><rect x="513.30" y="423.10" width="110.80" height="14.6" fill="#2d3659" stroke="#3a4570" stroke-width="0.8"/><polygon points="521.90,407.50 530.80,402.50 531.60,405.30 533.70,405.30 534.30,407.40 536.90,407.50 536.90,416.10 527.70,420.70 527.50,419.20 525.30,420.00 525.00,418.40 522.10,419.40" fill="#4c4c4c"/><polygon points="522.40,407.80 530.60,403.10 531.30,405.60 533.50,405.60 534.00,407.70 536.30,407.90 527.90,413.10" fill="url(#ck)"/><polygon points="528.10,413.60 536.40,408.40 536.40,415.70 528.10,419.90" fill="#c8c8c8"/><polygon points="525.50,412.10 527.10,413.10 527.10,418.60 525.50,419.30" fill="#c2c2c2"/><polygon points="522.60,409.90 524.40,411.00 524.40,417.90 522.60,418.70" fill="#c2c2c2"/><rect x="605.75" y="405.00" width="11.4" height="2.95" rx="1.3" fill="#cdccc6"/><rect x="605.75" y="408.97" width="11.4" height="2.95" rx="1.3" fill="#cdccc6"/><rect x="605.75" y="412.94" width="11.4" height="2.95" rx="1.3" fill="#cdccc6"/><path transform="translate(592.25 405.05)" d="M0 0h4.5v4.6l1.35 2.2h-3l-0.45 4.2h-0.3l-0.45-4.2h-3l1.35-2.2z" fill="#c6c6c6"/><circle cx="509.00" cy="411.50" r="5.5" fill="#ffa500" stroke="#000" stroke-width="0.9"/><circle cx="628.10" cy="411.50" r="5.5" fill="#ffa500" stroke="#000" stroke-width="0.9"/><circle cx="508.90" cy="446.60" r="4.1" fill="#0a26c6" stroke="#000" stroke-width="0.9"/><circle cx="628.10" cy="446.60" r="4.1" fill="#0a26c6" stroke="#000" stroke-width="0.9"/><circle cx="508.90" cy="461.90" r="4.1" fill="#0a26c6" stroke="#000" stroke-width="0.9"/><circle cx="628.10" cy="461.90" r="4.1" fill="#0a26c6" stroke="#000" stroke-width="0.9"/><circle cx="508.90" cy="477.20" r="4.1" fill="#0a26c6" stroke="#000" stroke-width="0.9"/><circle cx="628.10" cy="477.20" r="4.1" fill="#0a26c6" stroke="#000" stroke-width="0.9"/><g shape-rendering="crispEdges" stroke="#9e9e9e" stroke-width="1" fill="none"><rect x="514.5" y="473.5" width="6" height="6"/><path d="M514.5 476.5h6"/><path d="M517.5 473.5v6"/></g><circle cx="508.90" cy="492.50" r="4.1" fill="#0a26c6" stroke="#000" stroke-width="0.9"/><circle cx="628.10" cy="492.50" r="4.1" fill="#0a26c6" stroke="#000" stroke-width="0.9"/><circle cx="508.90" cy="507.80" r="4.1" fill="#0a26c6" stroke="#000" stroke-width="0.9"/><circle cx="628.10" cy="507.80" r="4.1" fill="#0a26c6" stroke="#000" stroke-width="0.9"/><circle cx="508.90" cy="523.10" r="4.1" fill="#0a26c6" stroke="#000" stroke-width="0.9"/><circle cx="628.10" cy="523.10" r="4.1" fill="#0a26c6" stroke="#000" stroke-width="0.9"/><circle cx="508.90" cy="538.40" r="4.1" fill="#0a26c6" stroke="#000" stroke-width="0.9"/><circle cx="628.10" cy="538.40" r="4.1" fill="#0a26c6" stroke="#000" stroke-width="0.9"/><circle cx="508.90" cy="553.70" r="4.1" fill="#0a26c6" stroke="#000" stroke-width="0.9"/><circle cx="628.10" cy="553.70" r="4.1" fill="#0a26c6" stroke="#000" stroke-width="0.9"/><circle cx="508.90" cy="569.00" r="4.1" fill="#0a26c6" stroke="#000" stroke-width="0.9"/><circle cx="628.10" cy="569.00" r="4.1" fill="#0a26c6" stroke="#000" stroke-width="0.9"/><circle cx="508.90" cy="584.30" r="4.1" fill="#0a26c6" stroke="#000" stroke-width="0.9"/><circle cx="628.10" cy="584.30" r="4.1" fill="#0a26c6" stroke="#000" stroke-width="0.9"/><circle cx="508.90" cy="599.60" r="4.1" fill="#0a26c6" stroke="#000" stroke-width="0.9"/><circle cx="628.10" cy="599.60" r="4.1" fill="#0a26c6" stroke="#000" stroke-width="0.9"/><circle cx="508.90" cy="614.90" r="4.1" fill="#0a26c6" stroke="#000" stroke-width="0.9"/><circle cx="628.10" cy="614.90" r="4.1" fill="#0a26c6" stroke="#000" stroke-width="0.9"/><circle cx="508.90" cy="630.20" r="4.1" fill="#0a26c6" stroke="#000" stroke-width="0.9"/><circle cx="628.10" cy="630.20" r="4.1" fill="#0a26c6" stroke="#000" stroke-width="0.9"/><g shape-rendering="crispEdges" stroke="#9e9e9e" stroke-width="1" fill="none"><rect x="514.5" y="626.5" width="6" height="6"/><path d="M514.5 629.5h6"/></g><path d="M517.50 633.50V637.85" stroke="#9a9a9a" stroke-width="0.9"/><circle cx="508.90" cy="645.50" r="4.1" fill="#0a26c6" stroke="#000" stroke-width="0.9"/><circle cx="628.10" cy="645.50" r="4.1" fill="#0a26c6" stroke="#000" stroke-width="0.9"/><path d="M517.50 637.85V653.15M517.50 645.50H528.20" stroke="#9a9a9a" stroke-width="0.9" fill="none"/><circle cx="508.90" cy="660.80" r="4.1" fill="#0a26c6" stroke="#000" stroke-width="0.9"/><circle cx="628.10" cy="660.80" r="4.1" fill="#0a26c6" stroke="#000" stroke-width="0.9"/><path d="M517.50 653.15V668.45M517.50 660.80H528.20" stroke="#9a9a9a" stroke-width="0.9" fill="none"/><circle cx="508.90" cy="676.10" r="4.1" fill="#0a26c6" stroke="#000" stroke-width="0.9"/><circle cx="628.10" cy="676.10" r="4.1" fill="#0a26c6" stroke="#000" stroke-width="0.9"/><path d="M517.50 668.45V676.10M517.50 676.10H528.20" stroke="#9a9a9a" stroke-width="0.9" fill="none"/><circle cx="508.90" cy="691.40" r="4.1" fill="#0a26c6" stroke="#000" stroke-width="0.9"/><circle cx="628.10" cy="691.40" r="4.1" fill="#0a26c6" stroke="#000" stroke-width="0.9"/><g shape-rendering="crispEdges" stroke="#9e9e9e" stroke-width="1" fill="none"><rect x="514.5" y="688.5" width="6" height="6"/><path d="M514.5 691.5h6"/></g><path d="M517.50 694.70V699.05" stroke="#9a9a9a" stroke-width="0.9"/><circle cx="508.90" cy="706.70" r="4.1" fill="#0a26c6" stroke="#000" stroke-width="0.9"/><circle cx="628.10" cy="706.70" r="4.1" fill="#0a26c6" stroke="#000" stroke-width="0.9"/><path d="M517.50 699.05V714.35M517.50 706.70H528.20" stroke="#9a9a9a" stroke-width="0.9" fill="none"/><circle cx="508.90" cy="722.00" r="4.1" fill="#0a26c6" stroke="#000" stroke-width="0.9"/><circle cx="628.10" cy="722.00" r="4.1" fill="#0a26c6" stroke="#000" stroke-width="0.9"/><path d="M517.50 714.35V729.65M517.50 722.00H528.20" stroke="#9a9a9a" stroke-width="0.9" fill="none"/><circle cx="508.90" cy="737.30" r="4.1" fill="#0a26c6" stroke="#000" stroke-width="0.9"/><circle cx="628.10" cy="737.30" r="4.1" fill="#0a26c6" stroke="#000" stroke-width="0.9"/><path d="M517.50 729.65V737.30M517.50 737.30H528.20" stroke="#9a9a9a" stroke-width="0.9" fill="none"/><circle cx="508.90" cy="752.60" r="4.1" fill="#0a26c6" stroke="#000" stroke-width="0.9"/><circle cx="628.10" cy="752.60" r="4.1" fill="#0a26c6" stroke="#000" stroke-width="0.9"/><circle cx="508.90" cy="767.90" r="4.1" fill="#0a26c6" stroke="#000" stroke-width="0.9"/><circle cx="628.10" cy="767.90" r="4.1" fill="#0a26c6" stroke="#000" stroke-width="0.9"/><circle cx="508.90" cy="783.20" r="4.1" fill="#0a26c6" stroke="#000" stroke-width="0.9"/><circle cx="628.10" cy="783.20" r="4.1" fill="#0a26c6" stroke="#000" stroke-width="0.9"/><circle cx="508.90" cy="798.50" r="4.1" fill="#0a26c6" stroke="#000" stroke-width="0.9"/><circle cx="628.10" cy="798.50" r="4.1" fill="#0a26c6" stroke="#000" stroke-width="0.9"/><circle cx="508.90" cy="813.80" r="4.1" fill="#0a26c6" stroke="#000" stroke-width="0.9"/><circle cx="628.10" cy="813.80" r="4.1" fill="#0a26c6" stroke="#000" stroke-width="0.9"/><circle cx="508.90" cy="829.10" r="4.1" fill="#0a26c6" stroke="#000" stroke-width="0.9"/><circle cx="628.10" cy="829.10" r="4.1" fill="#0a26c6" stroke="#000" stroke-width="0.9"/><circle cx="508.90" cy="844.40" r="4.1" fill="#0a26c6" stroke="#000" stroke-width="0.9"/><circle cx="628.10" cy="844.40" r="4.1" fill="#0a26c6" stroke="#000" stroke-width="0.9"/><g shape-rendering="crispEdges" stroke="#9e9e9e" stroke-width="1" fill="none"><rect x="514.5" y="841.5" width="6" height="6"/><path d="M514.5 844.5h6"/><path d="M517.5 841.5v6"/></g><circle cx="508.90" cy="859.70" r="4.1" fill="#0a26c6" stroke="#000" stroke-width="0.9"/><circle cx="628.10" cy="859.70" r="4.1" fill="#0a26c6" stroke="#000" stroke-width="0.9"/>
<clipPath id="cmeta_r_hand"><rect x="745.50" y="489.00" width="119.40" height="228.35" rx="4.8"/></clipPath><rect x="745.50" y="489.00" width="119.40" height="228.35" rx="4.8" fill="#30417a"/><g clip-path="url(#cmeta_r_hand)"><rect x="744.30" y="543.25" width="121.80" height="15.30" fill="#404f83"/><rect x="744.30" y="573.85" width="121.80" height="15.30" fill="#404f83"/><rect x="744.30" y="604.45" width="121.80" height="15.30" fill="#404f83"/><rect x="744.30" y="635.05" width="121.80" height="15.30" fill="#404f83"/><rect x="744.30" y="665.65" width="121.80" height="15.30" fill="#404f83"/><rect x="744.30" y="696.25" width="121.80" height="15.30" fill="#404f83"/></g><rect x="745.50" y="489.00" width="119.40" height="228.35" rx="4.8" fill="none" stroke="#43ffa3" stroke-width="2.4"/><rect x="749.90" y="512.10" width="110.80" height="14.6" fill="#2d3659" stroke="#3a4570" stroke-width="0.8"/><polygon points="758.50,496.50 767.40,491.50 768.20,494.30 770.30,494.30 770.90,496.40 773.50,496.50 773.50,505.10 764.30,509.70 764.10,508.20 761.90,509.00 761.60,507.40 758.70,508.40" fill="#4c4c4c"/><polygon points="759.00,496.80 767.20,492.10 767.90,494.60 770.10,494.60 770.60,496.70 772.90,496.90 764.50,502.10" fill="url(#ck)"/><polygon points="764.70,502.60 773.00,497.40 773.00,504.70 764.70,508.90" fill="#c8c8c8"/><polygon points="762.10,501.10 763.70,502.10 763.70,507.60 762.10,508.30" fill="#c2c2c2"/><polygon points="759.20,498.90 761.00,500.00 761.00,506.90 759.20,507.70" fill="#c2c2c2"/><rect x="842.35" y="494.00" width="11.4" height="2.95" rx="1.3" fill="#cdccc6"/><rect x="842.35" y="497.97" width="11.4" height="2.95" rx="1.3" fill="#cdccc6"/><rect x="842.35" y="501.94" width="11.4" height="2.95" rx="1.3" fill="#cdccc6"/><path transform="translate(828.85 494.05)" d="M0 0h4.5v4.6l1.35 2.2h-3l-0.45 4.2h-0.3l-0.45-4.2h-3l1.35-2.2z" fill="#c6c6c6"/><circle cx="745.60" cy="500.50" r="5.5" fill="#ffa500" stroke="#000" stroke-width="0.9"/><circle cx="864.70" cy="500.50" r="5.5" fill="#ffa500" stroke="#000" stroke-width="0.9"/><circle cx="745.50" cy="535.60" r="4.1" fill="#0a26c6" stroke="#000" stroke-width="0.9"/><circle cx="864.70" cy="535.60" r="4.1" fill="#0a26c6" stroke="#000" stroke-width="0.9"/><circle cx="745.50" cy="550.90" r="4.1" fill="#0a26c6" stroke="#000" stroke-width="0.9"/><circle cx="864.70" cy="550.90" r="4.1" fill="#0a26c6" stroke="#000" stroke-width="0.9"/><g shape-rendering="crispEdges" stroke="#9e9e9e" stroke-width="1" fill="none"><rect x="751.5" y="547.5" width="6" height="6"/><path d="M751.5 550.5h6"/><path d="M754.5 547.5v6"/></g><circle cx="745.50" cy="566.20" r="4.1" fill="#0a26c6" stroke="#000" stroke-width="0.9"/><circle cx="864.70" cy="566.20" r="4.1" fill="#0a26c6" stroke="#000" stroke-width="0.9"/><circle cx="745.50" cy="581.50" r="4.1" fill="#0a26c6" stroke="#000" stroke-width="0.9"/><circle cx="864.70" cy="581.50" r="4.1" fill="#0a26c6" stroke="#000" stroke-width="0.9"/><circle cx="745.50" cy="596.80" r="4.1" fill="#0a26c6" stroke="#000" stroke-width="0.9"/><circle cx="864.70" cy="596.80" r="4.1" fill="#0a26c6" stroke="#000" stroke-width="0.9"/><circle cx="745.50" cy="612.10" r="4.1" fill="#0a26c6" stroke="#000" stroke-width="0.9"/><circle cx="864.70" cy="612.10" r="4.1" fill="#0a26c6" stroke="#000" stroke-width="0.9"/><circle cx="745.50" cy="627.40" r="4.1" fill="#0a26c6" stroke="#000" stroke-width="0.9"/><circle cx="864.70" cy="627.40" r="4.1" fill="#0a26c6" stroke="#000" stroke-width="0.9"/><circle cx="745.50" cy="642.70" r="4.1" fill="#0a26c6" stroke="#000" stroke-width="0.9"/><circle cx="864.70" cy="642.70" r="4.1" fill="#0a26c6" stroke="#000" stroke-width="0.9"/><circle cx="745.50" cy="658.00" r="4.1" fill="#0a26c6" stroke="#000" stroke-width="0.9"/><circle cx="864.70" cy="658.00" r="4.1" fill="#0a26c6" stroke="#000" stroke-width="0.9"/><circle cx="745.50" cy="673.30" r="4.1" fill="#0a26c6" stroke="#000" stroke-width="0.9"/><circle cx="864.70" cy="673.30" r="4.1" fill="#0a26c6" stroke="#000" stroke-width="0.9"/><circle cx="745.50" cy="688.60" r="4.1" fill="#0a26c6" stroke="#000" stroke-width="0.9"/><circle cx="864.70" cy="688.60" r="4.1" fill="#0a26c6" stroke="#000" stroke-width="0.9"/><g shape-rendering="crispEdges" stroke="#9e9e9e" stroke-width="1" fill="none"><rect x="751.5" y="685.5" width="6" height="6"/><path d="M751.5 688.5h6"/><path d="M754.5 685.5v6"/></g><circle cx="745.50" cy="703.90" r="4.1" fill="#0a26c6" stroke="#000" stroke-width="0.9"/><circle cx="864.70" cy="703.90" r="4.1" fill="#0a26c6" stroke="#000" stroke-width="0.9"/>
<clipPath id="cmeta_r_index"><rect x="1030.50" y="320.50" width="119.40" height="228.35" rx="4.8"/></clipPath><rect x="1030.50" y="320.50" width="119.40" height="228.35" rx="4.8" fill="#30417a"/><g clip-path="url(#cmeta_r_index)"><rect x="1029.30" y="374.75" width="121.80" height="15.30" fill="#404f83"/><rect x="1029.30" y="405.35" width="121.80" height="15.30" fill="#404f83"/><rect x="1029.30" y="435.95" width="121.80" height="15.30" fill="#404f83"/><rect x="1029.30" y="466.55" width="121.80" height="15.30" fill="#404f83"/><rect x="1029.30" y="497.15" width="121.80" height="15.30" fill="#404f83"/><rect x="1029.30" y="527.75" width="121.80" height="15.30" fill="#404f83"/></g><rect x="1030.50" y="320.50" width="119.40" height="228.35" rx="4.8" fill="none" stroke="#43ffa3" stroke-width="2.4"/><rect x="1034.90" y="343.60" width="110.80" height="14.6" fill="#2d3659" stroke="#3a4570" stroke-width="0.8"/><polygon points="1043.50,328.00 1052.40,323.00 1053.20,325.80 1055.30,325.80 1055.90,327.90 1058.50,328.00 1058.50,336.60 1049.30,341.20 1049.10,339.70 1046.90,340.50 1046.60,338.90 1043.70,339.90" fill="#4c4c4c"/><polygon points="1044.00,328.30 1052.20,323.60 1052.90,326.10 1055.10,326.10 1055.60,328.20 1057.90,328.40 1049.50,333.60" fill="url(#ck)"/><polygon points="1049.70,334.10 1058.00,328.90 1058.00,336.20 1049.70,340.40" fill="#c8c8c8"/><polygon points="1047.10,332.60 1048.70,333.60 1048.70,339.10 1047.10,339.80" fill="#c2c2c2"/><polygon points="1044.20,330.40 1046.00,331.50 1046.00,338.40 1044.20,339.20" fill="#c2c2c2"/><rect x="1127.35" y="325.50" width="11.4" height="2.95" rx="1.3" fill="#cdccc6"/><rect x="1127.35" y="329.47" width="11.4" height="2.95" rx="1.3" fill="#cdccc6"/><rect x="1127.35" y="333.44" width="11.4" height="2.95" rx="1.3" fill="#cdccc6"/><path transform="translate(1113.85 325.55)" d="M0 0h4.5v4.6l1.35 2.2h-3l-0.45 4.2h-0.3l-0.45-4.2h-3l1.35-2.2z" fill="#c6c6c6"/><circle cx="1030.60" cy="332.00" r="5.5" fill="#ffa500" stroke="#000" stroke-width="0.9"/><circle cx="1149.70" cy="332.00" r="5.5" fill="#ffffff" stroke="#000" stroke-width="0.9"/><circle cx="1030.50" cy="367.10" r="4.1" fill="#0a26c6" stroke="#000" stroke-width="0.9"/><circle cx="1149.70" cy="367.10" r="4.1" fill="#0a26c6" stroke="#000" stroke-width="0.9"/><circle cx="1030.50" cy="382.40" r="4.1" fill="#0a26c6" stroke="#000" stroke-width="0.9"/><circle cx="1149.70" cy="382.40" r="4.1" fill="#0a26c6" stroke="#000" stroke-width="0.9"/><g shape-rendering="crispEdges" stroke="#9e9e9e" stroke-width="1" fill="none"><rect x="1036.5" y="379.5" width="6" height="6"/><path d="M1036.5 382.5h6"/><path d="M1039.5 379.5v6"/></g><circle cx="1030.50" cy="397.70" r="4.1" fill="#0a26c6" stroke="#000" stroke-width="0.9"/><circle cx="1149.70" cy="397.70" r="4.1" fill="#0a26c6" stroke="#000" stroke-width="0.9"/><g shape-rendering="crispEdges" stroke="#9e9e9e" stroke-width="1" fill="none"><rect x="1036.5" y="394.5" width="6" height="6"/><path d="M1036.5 397.5h6"/><path d="M1039.5 394.5v6"/></g><circle cx="1030.50" cy="413.00" r="4.1" fill="#0a26c6" stroke="#000" stroke-width="0.9"/><circle cx="1149.70" cy="413.00" r="4.1" fill="#0a26c6" stroke="#000" stroke-width="0.9"/><g shape-rendering="crispEdges" stroke="#9e9e9e" stroke-width="1" fill="none"><rect x="1036.5" y="409.5" width="6" height="6"/><path d="M1036.5 412.5h6"/><path d="M1039.5 409.5v6"/></g><circle cx="1030.50" cy="428.30" r="4.1" fill="#0a26c6" stroke="#000" stroke-width="0.9"/><circle cx="1149.70" cy="428.30" r="4.1" fill="#0a26c6" stroke="#000" stroke-width="0.9"/><circle cx="1030.50" cy="443.60" r="4.1" fill="#0a26c6" stroke="#000" stroke-width="0.9"/><circle cx="1149.70" cy="443.60" r="4.1" fill="#0a26c6" stroke="#000" stroke-width="0.9"/><circle cx="1030.50" cy="458.90" r="4.1" fill="#0a26c6" stroke="#000" stroke-width="0.9"/><circle cx="1149.70" cy="458.90" r="4.1" fill="#0a26c6" stroke="#000" stroke-width="0.9"/><circle cx="1030.50" cy="474.20" r="4.1" fill="#0a26c6" stroke="#000" stroke-width="0.9"/><circle cx="1149.70" cy="474.20" r="4.1" fill="#0a26c6" stroke="#000" stroke-width="0.9"/><circle cx="1030.50" cy="489.50" r="4.1" fill="#0a26c6" stroke="#000" stroke-width="0.9"/><circle cx="1149.70" cy="489.50" r="4.1" fill="#0a26c6" stroke="#000" stroke-width="0.9"/><circle cx="1030.50" cy="504.80" r="4.1" fill="#0a26c6" stroke="#000" stroke-width="0.9"/><circle cx="1149.70" cy="504.80" r="4.1" fill="#0a26c6" stroke="#000" stroke-width="0.9"/><circle cx="1030.50" cy="520.10" r="4.1" fill="#0a26c6" stroke="#000" stroke-width="0.9"/><circle cx="1149.70" cy="520.10" r="4.1" fill="#0a26c6" stroke="#000" stroke-width="0.9"/><g shape-rendering="crispEdges" stroke="#9e9e9e" stroke-width="1" fill="none"><rect x="1036.5" y="516.5" width="6" height="6"/><path d="M1036.5 519.5h6"/><path d="M1039.5 516.5v6"/></g><circle cx="1030.50" cy="535.40" r="4.1" fill="#0a26c6" stroke="#000" stroke-width="0.9"/><circle cx="1149.70" cy="535.40" r="4.1" fill="#0a26c6" stroke="#000" stroke-width="0.9"/>
<clipPath id="cmeta_r_thumb"><rect x="1036.70" y="640.50" width="119.40" height="228.35" rx="4.8"/></clipPath><rect x="1036.70" y="640.50" width="119.40" height="228.35" rx="4.8" fill="#30417a"/><g clip-path="url(#cmeta_r_thumb)"><rect x="1035.50" y="694.75" width="121.80" height="15.30" fill="#404f83"/><rect x="1035.50" y="725.35" width="121.80" height="15.30" fill="#404f83"/><rect x="1035.50" y="755.95" width="121.80" height="15.30" fill="#404f83"/><rect x="1035.50" y="786.55" width="121.80" height="15.30" fill="#404f83"/><rect x="1035.50" y="817.15" width="121.80" height="15.30" fill="#404f83"/><rect x="1035.50" y="847.75" width="121.80" height="15.30" fill="#404f83"/></g><rect x="1036.70" y="640.50" width="119.40" height="228.35" rx="4.8" fill="none" stroke="#43ffa3" stroke-width="2.4"/><rect x="1041.10" y="663.60" width="110.80" height="14.6" fill="#2d3659" stroke="#3a4570" stroke-width="0.8"/><polygon points="1049.70,648.00 1058.60,643.00 1059.40,645.80 1061.50,645.80 1062.10,647.90 1064.70,648.00 1064.70,656.60 1055.50,661.20 1055.30,659.70 1053.10,660.50 1052.80,658.90 1049.90,659.90" fill="#4c4c4c"/><polygon points="1050.20,648.30 1058.40,643.60 1059.10,646.10 1061.30,646.10 1061.80,648.20 1064.10,648.40 1055.70,653.60" fill="url(#ck)"/><polygon points="1055.90,654.10 1064.20,648.90 1064.20,656.20 1055.90,660.40" fill="#c8c8c8"/><polygon points="1053.30,652.60 1054.90,653.60 1054.90,659.10 1053.30,659.80" fill="#c2c2c2"/><polygon points="1050.40,650.40 1052.20,651.50 1052.20,658.40 1050.40,659.20" fill="#c2c2c2"/><rect x="1133.55" y="645.50" width="11.4" height="2.95" rx="1.3" fill="#cdccc6"/><rect x="1133.55" y="649.47" width="11.4" height="2.95" rx="1.3" fill="#cdccc6"/><rect x="1133.55" y="653.44" width="11.4" height="2.95" rx="1.3" fill="#cdccc6"/><path transform="translate(1120.05 645.55)" d="M0 0h4.5v4.6l1.35 2.2h-3l-0.45 4.2h-0.3l-0.45-4.2h-3l1.35-2.2z" fill="#c6c6c6"/><circle cx="1036.80" cy="652.00" r="5.5" fill="#ffa500" stroke="#000" stroke-width="0.9"/><circle cx="1155.90" cy="652.00" r="5.5" fill="#ffffff" stroke="#000" stroke-width="0.9"/><circle cx="1036.70" cy="687.10" r="4.1" fill="#0a26c6" stroke="#000" stroke-width="0.9"/><circle cx="1155.90" cy="687.10" r="4.1" fill="#0a26c6" stroke="#000" stroke-width="0.9"/><circle cx="1036.70" cy="702.40" r="4.1" fill="#0a26c6" stroke="#000" stroke-width="0.9"/><circle cx="1155.90" cy="702.40" r="4.1" fill="#0a26c6" stroke="#000" stroke-width="0.9"/><g shape-rendering="crispEdges" stroke="#9e9e9e" stroke-width="1" fill="none"><rect x="1042.5" y="699.5" width="6" height="6"/><path d="M1042.5 702.5h6"/><path d="M1045.5 699.5v6"/></g><circle cx="1036.70" cy="717.70" r="4.1" fill="#0a26c6" stroke="#000" stroke-width="0.9"/><circle cx="1155.90" cy="717.70" r="4.1" fill="#0a26c6" stroke="#000" stroke-width="0.9"/><g shape-rendering="crispEdges" stroke="#9e9e9e" stroke-width="1" fill="none"><rect x="1042.5" y="714.5" width="6" height="6"/><path d="M1042.5 717.5h6"/><path d="M1045.5 714.5v6"/></g><circle cx="1036.70" cy="733.00" r="4.1" fill="#0a26c6" stroke="#000" stroke-width="0.9"/><circle cx="1155.90" cy="733.00" r="4.1" fill="#0a26c6" stroke="#000" stroke-width="0.9"/><circle cx="1036.70" cy="748.30" r="4.1" fill="#0a26c6" stroke="#000" stroke-width="0.9"/><circle cx="1155.90" cy="748.30" r="4.1" fill="#0a26c6" stroke="#000" stroke-width="0.9"/><g shape-rendering="crispEdges" stroke="#9e9e9e" stroke-width="1" fill="none"><rect x="1042.5" y="745.5" width="6" height="6"/><path d="M1042.5 748.5h6"/><path d="M1045.5 745.5v6"/></g><circle cx="1036.70" cy="763.60" r="4.1" fill="#0a26c6" stroke="#000" stroke-width="0.9"/><circle cx="1155.90" cy="763.60" r="4.1" fill="#0a26c6" stroke="#000" stroke-width="0.9"/><circle cx="1036.70" cy="778.90" r="4.1" fill="#0a26c6" stroke="#000" stroke-width="0.9"/><circle cx="1155.90" cy="778.90" r="4.1" fill="#0a26c6" stroke="#000" stroke-width="0.9"/><circle cx="1036.70" cy="794.20" r="4.1" fill="#0a26c6" stroke="#000" stroke-width="0.9"/><circle cx="1155.90" cy="794.20" r="4.1" fill="#0a26c6" stroke="#000" stroke-width="0.9"/><circle cx="1036.70" cy="809.50" r="4.1" fill="#0a26c6" stroke="#000" stroke-width="0.9"/><circle cx="1155.90" cy="809.50" r="4.1" fill="#0a26c6" stroke="#000" stroke-width="0.9"/><circle cx="1036.70" cy="824.80" r="4.1" fill="#0a26c6" stroke="#000" stroke-width="0.9"/><circle cx="1155.90" cy="824.80" r="4.1" fill="#0a26c6" stroke="#000" stroke-width="0.9"/><circle cx="1036.70" cy="840.10" r="4.1" fill="#0a26c6" stroke="#000" stroke-width="0.9"/><circle cx="1155.90" cy="840.10" r="4.1" fill="#0a26c6" stroke="#000" stroke-width="0.9"/><g shape-rendering="crispEdges" stroke="#9e9e9e" stroke-width="1" fill="none"><rect x="1042.5" y="836.5" width="6" height="6"/><path d="M1042.5 839.5h6"/><path d="M1045.5 836.5v6"/></g><circle cx="1036.70" cy="855.40" r="4.1" fill="#0a26c6" stroke="#000" stroke-width="0.9"/><circle cx="1155.90" cy="855.40" r="4.1" fill="#0a26c6" stroke="#000" stroke-width="0.9"/>
<rect x="504.80" y="337.20" width="119.40" height="23.90" rx="4.8" fill="#1b5848" stroke="#43ffa3" stroke-width="2.4"/><g transform="translate(518.50 342.50)"><path d="M-1.5 2.4L1.5 2.4L2.4 9.4L-2.4 9.4Z" fill="#79b3e6" stroke="#143c33" stroke-width="0.5"/><path d="M2.9 -0.6L9.2 3.0L8.6 8.6L1.4 2.8Z" fill="#79b3e6" stroke="#143c33" stroke-width="0.5"/><circle cx="0" cy="0" r="2.95" fill="#79b3e6" stroke="#143c33" stroke-width="0.6"/><circle cx="0" cy="0" r="1.05" fill="#f4f8fc" stroke="#2f4a66" stroke-width="0.7"/><circle cx="0" cy="12" r="2.95" fill="#79b3e6" stroke="#143c33" stroke-width="0.6"/><circle cx="0" cy="12" r="1.05" fill="#f4f8fc" stroke="#2f4a66" stroke-width="0.7"/><circle cx="11" cy="5.95" r="2.95" fill="#79b3e6" stroke="#143c33" stroke-width="0.6"/><circle cx="11" cy="5.95" r="1.05" fill="#f4f8fc" stroke="#2f4a66" stroke-width="0.7"/></g><rect x="602.00" y="342.00" width="11.4" height="2.95" rx="1.3" fill="#cdccc6"/><rect x="602.45" y="346.42" width="10.5" height="2.05" rx="0.9" fill="none" stroke="#a9b8b0" stroke-width="0.9"/><rect x="602.45" y="350.39" width="10.5" height="2.05" rx="0.9" fill="none" stroke="#a9b8b0" stroke-width="0.9"/><circle cx="504.70" cy="348.75" r="5.5" fill="#ffffff" stroke="#000" stroke-width="0.9"/><circle cx="624.00" cy="348.75" r="5.5" fill="#ffa500" stroke="#000" stroke-width="0.9"/>
<rect x="266.00" y="688.20" width="119.40" height="23.90" rx="4.8" fill="#1b5848" stroke="#43ffa3" stroke-width="2.4"/><g transform="translate(279.70 693.50)"><path d="M-1.5 2.4L1.5 2.4L2.4 9.4L-2.4 9.4Z" fill="#79b3e6" stroke="#143c33" stroke-width="0.5"/><path d="M2.9 -0.6L9.2 3.0L8.6 8.6L1.4 2.8Z" fill="#79b3e6" stroke="#143c33" stroke-width="0.5"/><circle cx="0" cy="0" r="2.95" fill="#79b3e6" stroke="#143c33" stroke-width="0.6"/><circle cx="0" cy="0" r="1.05" fill="#f4f8fc" stroke="#2f4a66" stroke-width="0.7"/><circle cx="0" cy="12" r="2.95" fill="#79b3e6" stroke="#143c33" stroke-width="0.6"/><circle cx="0" cy="12" r="1.05" fill="#f4f8fc" stroke="#2f4a66" stroke-width="0.7"/><circle cx="11" cy="5.95" r="2.95" fill="#79b3e6" stroke="#143c33" stroke-width="0.6"/><circle cx="11" cy="5.95" r="1.05" fill="#f4f8fc" stroke="#2f4a66" stroke-width="0.7"/></g><rect x="363.20" y="693.00" width="11.4" height="2.95" rx="1.3" fill="#cdccc6"/><rect x="363.65" y="697.42" width="10.5" height="2.05" rx="0.9" fill="none" stroke="#a9b8b0" stroke-width="0.9"/><rect x="363.65" y="701.39" width="10.5" height="2.05" rx="0.9" fill="none" stroke="#a9b8b0" stroke-width="0.9"/><circle cx="265.90" cy="699.75" r="5.5" fill="#ffffff" stroke="#000" stroke-width="0.9"/><circle cx="385.20" cy="699.75" r="5.5" fill="#0a26c6" stroke="#000" stroke-width="0.9"/>
<rect x="266.80" y="746.30" width="119.40" height="23.90" rx="4.8" fill="#1b5848" stroke="#43ffa3" stroke-width="2.4"/><g transform="translate(280.50 751.60)"><path d="M-1.5 2.4L1.5 2.4L2.4 9.4L-2.4 9.4Z" fill="#79b3e6" stroke="#143c33" stroke-width="0.5"/><path d="M2.9 -0.6L9.2 3.0L8.6 8.6L1.4 2.8Z" fill="#79b3e6" stroke="#143c33" stroke-width="0.5"/><circle cx="0" cy="0" r="2.95" fill="#79b3e6" stroke="#143c33" stroke-width="0.6"/><circle cx="0" cy="0" r="1.05" fill="#f4f8fc" stroke="#2f4a66" stroke-width="0.7"/><circle cx="0" cy="12" r="2.95" fill="#79b3e6" stroke="#143c33" stroke-width="0.6"/><circle cx="0" cy="12" r="1.05" fill="#f4f8fc" stroke="#2f4a66" stroke-width="0.7"/><circle cx="11" cy="5.95" r="2.95" fill="#79b3e6" stroke="#143c33" stroke-width="0.6"/><circle cx="11" cy="5.95" r="1.05" fill="#f4f8fc" stroke="#2f4a66" stroke-width="0.7"/></g><rect x="364.00" y="751.10" width="11.4" height="2.95" rx="1.3" fill="#cdccc6"/><rect x="364.45" y="755.52" width="10.5" height="2.05" rx="0.9" fill="none" stroke="#a9b8b0" stroke-width="0.9"/><rect x="364.45" y="759.49" width="10.5" height="2.05" rx="0.9" fill="none" stroke="#a9b8b0" stroke-width="0.9"/><circle cx="266.70" cy="757.85" r="5.5" fill="#ffffff" stroke="#000" stroke-width="0.9"/><circle cx="386.00" cy="757.85" r="5.5" fill="#ffa500" stroke="#000" stroke-width="0.9"/>
<rect x="261.60" y="809.20" width="119.40" height="23.90" rx="4.8" fill="#1b5848" stroke="#43ffa3" stroke-width="2.4"/><g transform="translate(275.30 814.50)"><path d="M-1.5 2.4L1.5 2.4L2.4 9.4L-2.4 9.4Z" fill="#79b3e6" stroke="#143c33" stroke-width="0.5"/><path d="M2.9 -0.6L9.2 3.0L8.6 8.6L1.4 2.8Z" fill="#79b3e6" stroke="#143c33" stroke-width="0.5"/><circle cx="0" cy="0" r="2.95" fill="#79b3e6" stroke="#143c33" stroke-width="0.6"/><circle cx="0" cy="0" r="1.05" fill="#f4f8fc" stroke="#2f4a66" stroke-width="0.7"/><circle cx="0" cy="12" r="2.95" fill="#79b3e6" stroke="#143c33" stroke-width="0.6"/><circle cx="0" cy="12" r="1.05" fill="#f4f8fc" stroke="#2f4a66" stroke-width="0.7"/><circle cx="11" cy="5.95" r="2.95" fill="#79b3e6" stroke="#143c33" stroke-width="0.6"/><circle cx="11" cy="5.95" r="1.05" fill="#f4f8fc" stroke="#2f4a66" stroke-width="0.7"/></g><rect x="358.80" y="814.00" width="11.4" height="2.95" rx="1.3" fill="#cdccc6"/><rect x="359.25" y="818.42" width="10.5" height="2.05" rx="0.9" fill="none" stroke="#a9b8b0" stroke-width="0.9"/><rect x="359.25" y="822.39" width="10.5" height="2.05" rx="0.9" fill="none" stroke="#a9b8b0" stroke-width="0.9"/><circle cx="261.50" cy="820.75" r="5.5" fill="#ffffff" stroke="#000" stroke-width="0.9"/><circle cx="380.80" cy="820.75" r="5.5" fill="#0a26c6" stroke="#000" stroke-width="0.9"/>
<rect x="265.70" y="859.20" width="119.40" height="23.90" rx="4.8" fill="#1b5848" stroke="#43ffa3" stroke-width="2.4"/><g transform="translate(279.40 864.50)"><path d="M-1.5 2.4L1.5 2.4L2.4 9.4L-2.4 9.4Z" fill="#79b3e6" stroke="#143c33" stroke-width="0.5"/><path d="M2.9 -0.6L9.2 3.0L8.6 8.6L1.4 2.8Z" fill="#79b3e6" stroke="#143c33" stroke-width="0.5"/><circle cx="0" cy="0" r="2.95" fill="#79b3e6" stroke="#143c33" stroke-width="0.6"/><circle cx="0" cy="0" r="1.05" fill="#f4f8fc" stroke="#2f4a66" stroke-width="0.7"/><circle cx="0" cy="12" r="2.95" fill="#79b3e6" stroke="#143c33" stroke-width="0.6"/><circle cx="0" cy="12" r="1.05" fill="#f4f8fc" stroke="#2f4a66" stroke-width="0.7"/><circle cx="11" cy="5.95" r="2.95" fill="#79b3e6" stroke="#143c33" stroke-width="0.6"/><circle cx="11" cy="5.95" r="1.05" fill="#f4f8fc" stroke="#2f4a66" stroke-width="0.7"/></g><rect x="362.90" y="864.00" width="11.4" height="2.95" rx="1.3" fill="#cdccc6"/><rect x="363.35" y="868.42" width="10.5" height="2.05" rx="0.9" fill="none" stroke="#a9b8b0" stroke-width="0.9"/><rect x="363.35" y="872.39" width="10.5" height="2.05" rx="0.9" fill="none" stroke="#a9b8b0" stroke-width="0.9"/><circle cx="265.60" cy="870.75" r="5.5" fill="#ffffff" stroke="#000" stroke-width="0.9"/><circle cx="384.90" cy="870.75" r="5.5" fill="#0a26c6" stroke="#000" stroke-width="0.9"/>
<rect x="269.60" y="923.90" width="119.40" height="23.90" rx="4.8" fill="#1b5848" stroke="#43ffa3" stroke-width="2.4"/><g transform="translate(283.30 929.20)"><path d="M-1.5 2.4L1.5 2.4L2.4 9.4L-2.4 9.4Z" fill="#79b3e6" stroke="#143c33" stroke-width="0.5"/><path d="M2.9 -0.6L9.2 3.0L8.6 8.6L1.4 2.8Z" fill="#79b3e6" stroke="#143c33" stroke-width="0.5"/><circle cx="0" cy="0" r="2.95" fill="#79b3e6" stroke="#143c33" stroke-width="0.6"/><circle cx="0" cy="0" r="1.05" fill="#f4f8fc" stroke="#2f4a66" stroke-width="0.7"/><circle cx="0" cy="12" r="2.95" fill="#79b3e6" stroke="#143c33" stroke-width="0.6"/><circle cx="0" cy="12" r="1.05" fill="#f4f8fc" stroke="#2f4a66" stroke-width="0.7"/><circle cx="11" cy="5.95" r="2.95" fill="#79b3e6" stroke="#143c33" stroke-width="0.6"/><circle cx="11" cy="5.95" r="1.05" fill="#f4f8fc" stroke="#2f4a66" stroke-width="0.7"/></g><rect x="366.80" y="928.70" width="11.4" height="2.95" rx="1.3" fill="#cdccc6"/><rect x="367.25" y="933.12" width="10.5" height="2.05" rx="0.9" fill="none" stroke="#a9b8b0" stroke-width="0.9"/><rect x="367.25" y="937.09" width="10.5" height="2.05" rx="0.9" fill="none" stroke="#a9b8b0" stroke-width="0.9"/><circle cx="269.50" cy="935.45" r="5.5" fill="#ffffff" stroke="#000" stroke-width="0.9"/><circle cx="388.80" cy="935.45" r="5.5" fill="#0a26c6" stroke="#000" stroke-width="0.9"/>
<path d="M0 97.0H1188.6V1002.0H1185.4V101.6Q1185.4 99.7 1183.4 99.7H0Z" fill="#262626"/>
<path d="M0 97.4H1187.2Q1189.2 97.4 1189.2 99.4V1002.0" fill="none" stroke="#4c4c4c" stroke-width="0.9"/>
<text x="266.30" y="222.62" font-size="9.35" fill="#f0f0f0" letter-spacing="0.209" text-anchor="start">Build Node</text><text x="266.30" y="237.92" font-size="9.35" fill="#f0f0f0" letter-spacing="0.250" text-anchor="start">Child Module</text><text x="266.30" y="253.22" font-size="9.35" fill="#f0f0f0" letter-spacing="0.014" text-anchor="start">Ctl Spine</text><text x="266.30" y="268.52" font-size="9.35" fill="#f0f0f0" letter-spacing="-0.037" text-anchor="start">Jnt Spine</text><text x="266.30" y="283.82" font-size="9.35" fill="#f0f0f0" letter-spacing="0.284" text-anchor="start">Module Root</text><text x="266.30" y="299.12" font-size="9.35" fill="#f0f0f0" letter-spacing="-0.041" text-anchor="start">Name Space</text><text x="266.30" y="314.42" font-size="9.35" fill="#f0f0f0" letter-spacing="0.189" text-anchor="start">Parent Module</text><text x="266.30" y="329.72" font-size="9.35" fill="#f0f0f0" letter-spacing="0.077" text-anchor="start">Region</text><text x="266.30" y="345.02" font-size="9.35" fill="#f0f0f0" letter-spacing="-0.108" text-anchor="start">Side</text><text x="266.30" y="360.32" font-size="9.35" fill="#f0f0f0" letter-spacing="-0.286" text-anchor="start">Spaces</text><text x="266.30" y="375.62" font-size="9.35" fill="#f0f0f0" letter-spacing="0.330" text-anchor="start">Toggler</text><text x="255.40" y="167.67" font-size="10.2" fill="#43ffa3" letter-spacing="0.014" text-anchor="start">meta_spine</text><text x="77.80" y="507.72" font-size="9.35" fill="#f0f0f0" letter-spacing="0.096" text-anchor="start">Biped</text><text x="77.80" y="523.02" font-size="9.35" fill="#f0f0f0" letter-spacing="0.119" text-anchor="start">Custom</text><text x="77.80" y="538.32" font-size="9.35" fill="#f0f0f0" letter-spacing="0.056" text-anchor="start">Human IK</text><text x="77.80" y="553.62" font-size="9.35" fill="#f0f0f0" letter-spacing="0.057" text-anchor="start">Unreal</text><text x="66.90" y="452.07" font-size="10.2" fill="#43ffa3" letter-spacing="-0.062" text-anchor="start">name_space_node</text><text x="523.30" y="449.92" font-size="9.35" fill="#f0f0f0" letter-spacing="-0.076" text-anchor="start">Blend Shapes</text><text x="523.30" y="465.22" font-size="9.35" fill="#f0f0f0" letter-spacing="0.209" text-anchor="start">Build Node</text><text x="523.30" y="480.52" font-size="9.35" fill="#f0f0f0" letter-spacing="0.250" text-anchor="start">Child Module</text><text x="523.30" y="495.82" font-size="9.35" fill="#f0f0f0" letter-spacing="-0.025" text-anchor="start">Ctl Fk Elbow</text><text x="523.30" y="511.12" font-size="9.35" fill="#f0f0f0" letter-spacing="0.015" text-anchor="start">Ctl Fk Hand</text><text x="523.30" y="526.42" font-size="9.35" fill="#f0f0f0" letter-spacing="0.125" text-anchor="start">Ctl Fk Upper Arm</text><text x="523.30" y="541.72" font-size="9.35" fill="#f0f0f0" letter-spacing="0.104" text-anchor="start">Ctl Ik Hand</text><text x="523.30" y="557.02" font-size="9.35" fill="#f0f0f0" letter-spacing="-0.040" text-anchor="start">Ctl Ik Pv</text><text x="523.30" y="572.32" font-size="9.35" fill="#f0f0f0" letter-spacing="0.097" text-anchor="start">Ctl Shoulder</text><text x="523.30" y="587.62" font-size="9.35" fill="#f0f0f0" letter-spacing="0.001" text-anchor="start">Jnt Elbow</text><text x="523.30" y="602.92" font-size="9.35" fill="#f0f0f0" letter-spacing="0.060" text-anchor="start">Jnt Hand</text><text x="523.30" y="618.22" font-size="9.35" fill="#f0f0f0" letter-spacing="0.058" text-anchor="start">Jnt Shoulder</text><text x="523.30" y="633.52" font-size="9.35" fill="#f0f0f0" letter-spacing="0.120" text-anchor="start">Jnt Twist Lower Arm</text><text x="533.60" y="648.82" font-size="9.35" fill="#f0f0f0" letter-spacing="0.063" text-anchor="start">Jnt Twist...er Arm[0]</text><text x="533.60" y="664.12" font-size="9.35" fill="#f0f0f0" letter-spacing="0.063" text-anchor="start">Jnt Twist...er Arm[1]</text><text x="533.60" y="679.42" font-size="9.35" fill="#f0f0f0" letter-spacing="0.063" text-anchor="start">Jnt Twist...er Arm[2]</text><text x="523.30" y="694.72" font-size="9.35" fill="#f0f0f0" letter-spacing="0.162" text-anchor="start">Jnt Twist Upper Arm</text><text x="533.60" y="710.02" font-size="9.35" fill="#f0f0f0" letter-spacing="0.063" text-anchor="start">Jnt Twist...er Arm[0]</text><text x="533.60" y="725.32" font-size="9.35" fill="#f0f0f0" letter-spacing="0.063" text-anchor="start">Jnt Twist...er Arm[1]</text><text x="533.60" y="740.62" font-size="9.35" fill="#f0f0f0" letter-spacing="0.063" text-anchor="start">Jnt Twist...er Arm[2]</text><text x="523.30" y="755.92" font-size="9.35" fill="#f0f0f0" letter-spacing="0.178" text-anchor="start">Jnt Upper Arm</text><text x="523.30" y="771.22" font-size="9.35" fill="#f0f0f0" letter-spacing="0.284" text-anchor="start">Module Root</text><text x="523.30" y="786.52" font-size="9.35" fill="#f0f0f0" letter-spacing="-0.041" text-anchor="start">Name Space</text><text x="523.30" y="801.82" font-size="9.35" fill="#f0f0f0" letter-spacing="0.189" text-anchor="start">Parent Module</text><text x="523.30" y="817.12" font-size="9.35" fill="#f0f0f0" letter-spacing="0.077" text-anchor="start">Region</text><text x="523.30" y="832.42" font-size="9.35" fill="#f0f0f0" letter-spacing="-0.108" text-anchor="start">Side</text><text x="523.30" y="847.72" font-size="9.35" fill="#f0f0f0" letter-spacing="-0.286" text-anchor="start">Spaces</text><text x="523.30" y="863.02" font-size="9.35" fill="#f0f0f0" letter-spacing="0.330" text-anchor="start">Toggler</text><text x="512.40" y="394.27" font-size="10.2" fill="#43ffa3" letter-spacing="-0.069" text-anchor="start">meta_r_arm</text><text x="759.90" y="538.92" font-size="9.35" fill="#f0f0f0" letter-spacing="0.209" text-anchor="start">Build Node</text><text x="759.90" y="554.22" font-size="9.35" fill="#f0f0f0" letter-spacing="0.250" text-anchor="start">Child Module</text><text x="759.90" y="569.52" font-size="9.35" fill="#f0f0f0" letter-spacing="0.245" text-anchor="start">Ctl Hand Attr</text><text x="759.90" y="584.82" font-size="9.35" fill="#f0f0f0" letter-spacing="0.113" text-anchor="start">Ctl Hand Prop</text><text x="759.90" y="600.12" font-size="9.35" fill="#f0f0f0" letter-spacing="0.060" text-anchor="start">Jnt Hand</text><text x="759.90" y="615.42" font-size="9.35" fill="#f0f0f0" letter-spacing="0.284" text-anchor="start">Module Root</text><text x="759.90" y="630.72" font-size="9.35" fill="#f0f0f0" letter-spacing="-0.041" text-anchor="start">Name Space</text><text x="759.90" y="646.02" font-size="9.35" fill="#f0f0f0" letter-spacing="0.189" text-anchor="start">Parent Module</text><text x="759.90" y="661.32" font-size="9.35" fill="#f0f0f0" letter-spacing="0.077" text-anchor="start">Region</text><text x="759.90" y="676.62" font-size="9.35" fill="#f0f0f0" letter-spacing="-0.108" text-anchor="start">Side</text><text x="759.90" y="691.92" font-size="9.35" fill="#f0f0f0" letter-spacing="-0.286" text-anchor="start">Spaces</text><text x="759.90" y="707.22" font-size="9.35" fill="#f0f0f0" letter-spacing="0.330" text-anchor="start">Toggler</text><text x="749.00" y="483.57" font-size="10.2" fill="#43ffa3" letter-spacing="-0.075" text-anchor="start">meta_r_hand</text><text x="1044.90" y="370.42" font-size="9.35" fill="#f0f0f0" letter-spacing="0.209" text-anchor="start">Build Node</text><text x="1044.90" y="385.72" font-size="9.35" fill="#f0f0f0" letter-spacing="0.250" text-anchor="start">Child Module</text><text x="1044.90" y="401.02" font-size="9.35" fill="#f0f0f0" letter-spacing="0.079" text-anchor="start">Ctl Index</text><text x="1044.90" y="416.32" font-size="9.35" fill="#f0f0f0" letter-spacing="0.028" text-anchor="start">Jnt Index</text><text x="1044.90" y="431.62" font-size="9.35" fill="#f0f0f0" letter-spacing="0.097" text-anchor="start">Jnt Metacarpal</text><text x="1044.90" y="446.92" font-size="9.35" fill="#f0f0f0" letter-spacing="0.284" text-anchor="start">Module Root</text><text x="1044.90" y="462.22" font-size="9.35" fill="#f0f0f0" letter-spacing="-0.041" text-anchor="start">Name Space</text><text x="1044.90" y="477.52" font-size="9.35" fill="#f0f0f0" letter-spacing="0.189" text-anchor="start">Parent Module</text><text x="1044.90" y="492.82" font-size="9.35" fill="#f0f0f0" letter-spacing="0.077" text-anchor="start">Region</text><text x="1044.90" y="508.12" font-size="9.35" fill="#f0f0f0" letter-spacing="-0.108" text-anchor="start">Side</text><text x="1044.90" y="523.42" font-size="9.35" fill="#f0f0f0" letter-spacing="-0.286" text-anchor="start">Spaces</text><text x="1044.90" y="538.72" font-size="9.35" fill="#f0f0f0" letter-spacing="0.330" text-anchor="start">Toggler</text><text x="1034.00" y="314.77" font-size="10.2" fill="#43ffa3" letter-spacing="0.024" text-anchor="start">meta_r_index</text><text x="1051.10" y="690.42" font-size="9.35" fill="#f0f0f0" letter-spacing="0.209" text-anchor="start">Build Node</text><text x="1051.10" y="705.72" font-size="9.35" fill="#f0f0f0" letter-spacing="0.250" text-anchor="start">Child Module</text><text x="1051.10" y="721.02" font-size="9.35" fill="#f0f0f0" letter-spacing="0.161" text-anchor="start">Ctl Thumb</text><text x="1051.10" y="736.32" font-size="9.35" fill="#f0f0f0" letter-spacing="0.097" text-anchor="start">Jnt Metacarpal</text><text x="1051.10" y="751.62" font-size="9.35" fill="#f0f0f0" letter-spacing="0.110" text-anchor="start">Jnt Thumb</text><text x="1051.10" y="766.92" font-size="9.35" fill="#f0f0f0" letter-spacing="0.284" text-anchor="start">Module Root</text><text x="1051.10" y="782.22" font-size="9.35" fill="#f0f0f0" letter-spacing="-0.041" text-anchor="start">Name Space</text><text x="1051.10" y="797.52" font-size="9.35" fill="#f0f0f0" letter-spacing="0.189" text-anchor="start">Parent Module</text><text x="1051.10" y="812.82" font-size="9.35" fill="#f0f0f0" letter-spacing="0.077" text-anchor="start">Region</text><text x="1051.10" y="828.12" font-size="9.35" fill="#f0f0f0" letter-spacing="-0.108" text-anchor="start">Side</text><text x="1051.10" y="843.42" font-size="9.35" fill="#f0f0f0" letter-spacing="-0.286" text-anchor="start">Spaces</text><text x="1051.10" y="858.72" font-size="9.35" fill="#f0f0f0" letter-spacing="0.330" text-anchor="start">Toggler</text><text x="1040.20" y="635.37" font-size="10.2" fill="#43ffa3" letter-spacing="0.174" text-anchor="start">meta_r_thumb</text><text x="508.50" y="332.12" font-size="10.2" fill="#43ffa3" letter-spacing="0.005" text-anchor="start">Character1_RightHand</text><text x="269.70" y="682.42" font-size="10.2" fill="#43ffa3" letter-spacing="0.024" text-anchor="start">Character1_RightForeArm</text><text x="270.50" y="740.52" font-size="10.2" fill="#43ffa3" letter-spacing="0.055" text-anchor="start">Character1_RightShoulder</text><text x="265.30" y="802.82" font-size="10.2" fill="#43ffa3" letter-spacing="0.003" text-anchor="start">Character1_LeafRightForeArmRoll1</text><text x="269.40" y="853.42" font-size="10.2" fill="#43ffa3" letter-spacing="0.032" text-anchor="start">Character1_LeafRightForeArmRoll2</text><text x="273.30" y="917.52" font-size="10.2" fill="#43ffa3" letter-spacing="0.024" text-anchor="start">Character1_LeafRightArmRoll2</text></svg>
<div class="t" style="top:7.59px;font-size:11.5px;color:#9c9c9c;letter-spacing:0.263px;left:-4.30px;">Graph Editor</div><div class="t" style="top:25.69px;font-size:11.5px;color:#d4d4d4;letter-spacing:-0.092px;left:0.00px;">okmarks</div><div class="t" style="top:25.69px;font-size:11.5px;color:#d4d4d4;letter-spacing:-0.600px;left:57.90px;">Tabs</div><div class="t" style="top:25.69px;font-size:11.5px;color:#d4d4d4;letter-spacing:0.260px;left:95.40px;">Options</div><div class="t" style="top:25.69px;font-size:11.5px;color:#d4d4d4;letter-spacing:-0.203px;left:152.50px;">Display</div><div class="t" style="top:25.69px;font-size:11.5px;color:#d4d4d4;letter-spacing:-0.094px;left:204.50px;">Show</div><div class="t" style="top:25.69px;font-size:11.5px;color:#d4d4d4;letter-spacing:-0.152px;left:248.20px;">Help</div><div class="t" style="top:50.59px;font-size:11.5px;color:#dedede;letter-spacing:-0.600px;left:648.60px;">-1</div><div class="t" style="top:51.79px;font-size:11.5px;color:#8c8c8c;letter-spacing:-0.566px;left:830.60px;">Search...</div><div class="t" style="top:13.59px;font-size:11.5px;color:#d8d8d8;letter-spacing:-0.435px;left:1209.20px;">List</div><div class="t" style="top:13.59px;font-size:11.5px;color:#d8d8d8;letter-spacing:-0.352px;left:1241.40px;">Selected</div><div class="t" style="top:13.59px;font-size:11.5px;color:#d8d8d8;letter-spacing:-0.482px;left:1299.50px;">Focus</div><div class="t" style="top:13.59px;font-size:11.5px;color:#d8d8d8;letter-spacing:0.214px;left:1344.10px;">Attributes</div><div class="t" style="top:13.59px;font-size:11.5px;color:#d8d8d8;letter-spacing:-0.170px;left:1410.40px;">Display</div><div class="t" style="top:13.59px;font-size:11.5px;color:#d8d8d8;letter-spacing:0.006px;left:1462.40px;">Show</div><div class="t" style="top:13.59px;font-size:11.5px;color:#d8d8d8;letter-spacing:-0.185px;left:1506.40px;">Help</div><div class="t" style="top:51.19px;font-size:11.5px;color:#f2f2f2;letter-spacing:-0.522px;left:1217.40px;">meta_r_arm</div><div class="t" style="top:51.19px;font-size:11.5px;color:#a0a0a0;letter-spacing:-0.208px;left:1299.50px;">meta_spine</div><div class="t" style="top:51.19px;font-size:11.5px;color:#a0a0a0;letter-spacing:-0.039px;left:1381.40px;">rig_meta_root</div><div class="t" style="top:51.19px;font-size:11.5px;color:#a0a0a0;letter-spacing:-0.296px;left:1476.20px;">name_space_node</div><div class="t" style="top:51.19px;font-size:11.5px;color:#a0a0a0;letter-spacing:0.436px;left:1594.20px;">thrott</div><div class="t" style="top:99.59px;font-size:11.5px;color:#c4c4c4;letter-spacing:0.290px;left:1304.30px;">network:</div><div class="t" style="top:101.09px;font-size:11.5px;color:#dadada;letter-spacing:-0.489px;left:1363.30px;">meta_r_arm</div><div class="t" style="top:78.89px;font-size:11.5px;color:#ececec;letter-spacing:-0.557px;left:1574.40px;">Focus</div><div class="t" style="top:100.89px;font-size:11.5px;color:#ececec;letter-spacing:-0.600px;left:1571.60px;">Presets</div><div class="t" style="top:122.89px;font-size:11.5px;color:#ececec;letter-spacing:-0.027px;left:1556.40px;">Show</div><div class="t" style="top:122.89px;font-size:11.5px;color:#ececec;letter-spacing:-0.185px;left:1595.30px;">Hide</div><div class="t" style="top:160.19px;font-size:11.5px;color:#cfcfcf;letter-spacing:-0.339px;font-weight:700;left:1243.60px;">Node Behavior</div><div class="t" style="top:182.49px;font-size:11.5px;color:#cfcfcf;letter-spacing:-0.600px;font-weight:700;left:1243.60px;">UUID</div><div class="t" style="top:204.49px;font-size:11.5px;color:#cfcfcf;letter-spacing:-0.356px;font-weight:700;left:1243.60px;">Extra Attributes</div><div class="t" style="top:225.79px;font-size:11.5px;color:#c4c4c4;letter-spacing:-0.071px;left:1318.40px;">Region</div><div class="t" style="top:226.89px;font-size:11.5px;color:#dcdcdc;letter-spacing:-0.600px;left:1368.10px;">arm</div><div class="t" style="top:249.99px;font-size:11.5px;color:#c4c4c4;letter-spacing:0.042px;left:1279.10px;">Parent Module</div><div class="t" style="top:249.99px;font-size:11.5px;color:#dcdcdc;letter-spacing:-0.230px;left:1368.70px;">meta_spine</div><div class="t" style="top:251.25px;font-size:10px;color:#e6e6e6;letter-spacing:0.000px;left:1627.20px;">&gt;</div><div class="t" style="top:274.99px;font-size:11.5px;color:#c4c4c4;letter-spacing:0.178px;left:1287.40px;">Module Root</div><div class="t" style="top:274.99px;font-size:11.5px;color:#dcdcdc;letter-spacing:-0.068px;left:1368.70px;">Character1_RightShoulder</div><div class="t" style="top:276.25px;font-size:10px;color:#e6e6e6;letter-spacing:0.000px;left:1627.20px;">&gt;</div><div class="t" style="top:299.99px;font-size:11.5px;color:#c4c4c4;letter-spacing:-0.600px;left:1333.30px;">Side</div><div class="t" style="top:299.99px;font-size:11.5px;color:#dcdcdc;letter-spacing:-0.258px;left:1368.70px;">meta_r_hand</div><div class="t" style="top:301.25px;font-size:10px;color:#e6e6e6;letter-spacing:0.000px;left:1627.20px;">&gt;</div><div class="t" style="top:324.99px;font-size:11.5px;color:#c4c4c4;letter-spacing:-0.086px;left:1317.20px;">Toggler</div><div class="t" style="top:324.99px;font-size:11.5px;color:#787878;letter-spacing:-0.600px;left:1615.80px;">map</div><div class="t" style="top:349.99px;font-size:11.5px;color:#c4c4c4;letter-spacing:-0.248px;left:1285.50px;">Blend Shapes</div><div class="t" style="top:349.99px;font-size:11.5px;color:#787878;letter-spacing:-0.600px;left:1615.80px;">map</div><div class="t" style="top:374.99px;font-size:11.5px;color:#c4c4c4;letter-spacing:-0.036px;left:1291.50px;">Ctl Shoulder</div><div class="t" style="top:374.99px;font-size:11.5px;color:#787878;letter-spacing:-0.600px;left:1615.80px;">map</div><div class="t" style="top:399.99px;font-size:11.5px;color:#c4c4c4;letter-spacing:-0.152px;left:1268.50px;">Ctl Fk Upper Arm</div><div class="t" style="top:399.99px;font-size:11.5px;color:#787878;letter-spacing:-0.600px;left:1615.80px;">map</div><div class="t" style="top:424.99px;font-size:11.5px;color:#c4c4c4;letter-spacing:-0.150px;left:1291.50px;">Ctl Fk Elbow</div><div class="t" style="top:424.99px;font-size:11.5px;color:#787878;letter-spacing:-0.600px;left:1615.80px;">map</div><div class="t" style="top:449.99px;font-size:11.5px;color:#c4c4c4;letter-spacing:-0.202px;left:1295.70px;">Ctl Fk Hand</div><div class="t" style="top:449.99px;font-size:11.5px;color:#787878;letter-spacing:-0.600px;left:1615.80px;">map</div><div class="t" style="top:474.99px;font-size:11.5px;color:#c4c4c4;letter-spacing:-0.477px;left:1315.40px;">Ctl Ik Pv</div><div class="t" style="top:474.99px;font-size:11.5px;color:#787878;letter-spacing:-0.600px;left:1615.80px;">map</div><div class="t" style="top:499.99px;font-size:11.5px;color:#c4c4c4;letter-spacing:-0.089px;left:1298.40px;">Ctl Ik Hand</div><div class="t" style="top:499.99px;font-size:11.5px;color:#787878;letter-spacing:-0.600px;left:1615.80px;">map</div><div class="t" style="top:524.99px;font-size:11.5px;color:#c4c4c4;letter-spacing:-0.025px;left:1290.10px;">Jnt Shoulder</div><div class="t" style="top:524.99px;font-size:11.5px;color:#dcdcdc;letter-spacing:-0.068px;left:1368.70px;">Character1_RightShoulder</div><div class="t" style="top:526.25px;font-size:10px;color:#e6e6e6;letter-spacing:0.000px;left:1627.20px;">&gt;</div><div class="t" style="top:549.99px;font-size:11.5px;color:#c4c4c4;letter-spacing:-0.083px;left:1281.90px;">Jnt Upper Arm</div><div class="t" style="top:549.99px;font-size:11.5px;color:#dcdcdc;letter-spacing:-0.234px;left:1368.70px;">Character1_RightArm</div><div class="t" style="top:551.25px;font-size:10px;color:#e6e6e6;letter-spacing:0.000px;left:1627.20px;">&gt;</div><div class="t" style="top:574.99px;font-size:11.5px;color:#c4c4c4;letter-spacing:-0.032px;left:1304.80px;">Jnt Elbow</div><div class="t" style="top:574.99px;font-size:11.5px;color:#dcdcdc;letter-spacing:-0.221px;left:1368.70px;">Character1_RightForeArm</div><div class="t" style="top:576.25px;font-size:10px;color:#e6e6e6;letter-spacing:0.000px;left:1627.20px;">&gt;</div><div class="t" style="top:599.99px;font-size:11.5px;color:#c4c4c4;letter-spacing:-0.090px;left:1309.00px;">Jnt Hand</div><div class="t" style="top:599.99px;font-size:11.5px;color:#dcdcdc;letter-spacing:-0.122px;left:1368.70px;">Character1_RightHand</div><div class="t" style="top:601.25px;font-size:10px;color:#e6e6e6;letter-spacing:0.000px;left:1627.20px;">&gt;</div><div class="t" style="top:624.99px;font-size:11.5px;color:#c4c4c4;letter-spacing:0.070px;left:1297.50px;">Build Node</div><div class="t" style="top:624.99px;font-size:11.5px;color:#787878;letter-spacing:-0.600px;left:1615.80px;">map</div><div class="t" style="top:649.99px;font-size:11.5px;color:#c4c4c4;letter-spacing:-0.600px;left:1293.40px;">Name Space</div><div class="t" style="top:649.99px;font-size:11.5px;color:#dcdcdc;letter-spacing:-0.332px;left:1368.70px;">name_space_node</div><div class="t" style="top:651.25px;font-size:10px;color:#e6e6e6;letter-spacing:0.000px;left:1627.20px;">&gt;</div><div class="t" style="top:847.29px;font-size:11.5px;color:#cfcfcf;letter-spacing:-0.452px;font-weight:700;left:1213.20px;">Notes:  meta_r_arm</div>
</body></html>
